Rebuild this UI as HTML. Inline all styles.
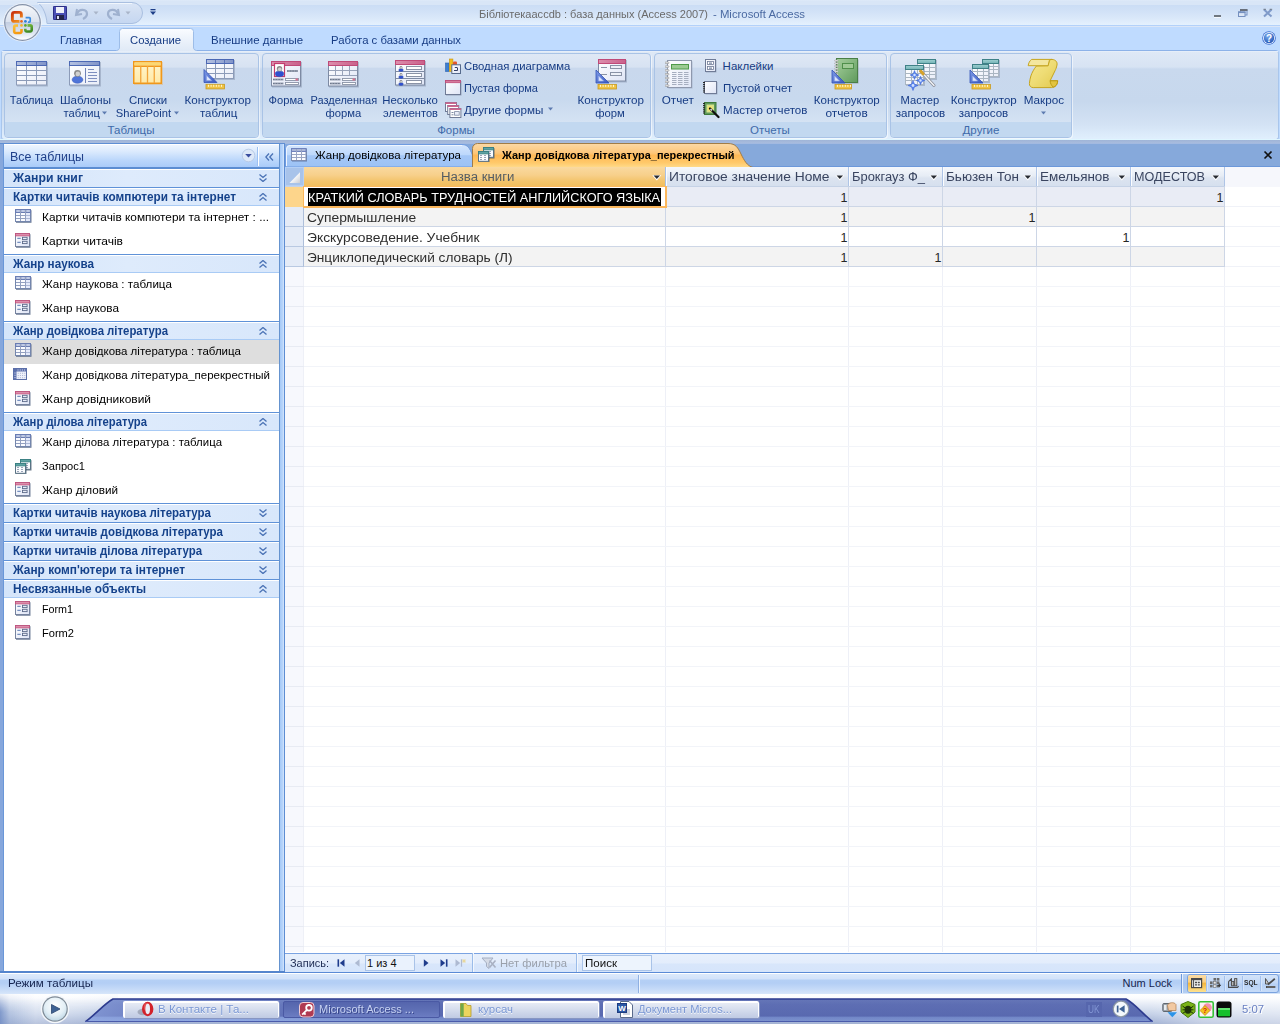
<!DOCTYPE html>
<html><head><meta charset="utf-8"><title>Microsoft Access</title>
<style>
html,body{margin:0;padding:0}
body{width:1280px;height:1024px;overflow:hidden;position:relative;background:#bfdbff;font-family:"Liberation Sans", sans-serif;font-size:11px}
div,span.t,svg{position:absolute;box-sizing:border-box}
span.t{white-space:pre;display:block}
</style></head>
<body>
<div style="left:0px;top:0px;width:1280px;height:27px;background:linear-gradient(#e0ebf9 0,#d9e6f7 1px,#d9e6f7 5px,#cbddf5 5px,#d2e2f7 12px,#dbe9fa 19px,#e4f1fe 25px,#b3d1fa 25px,#b3d1fa 26px,#dbe6f7 26px,#dbe6f7 27px)"></div>
<div style="left:0px;top:27px;width:1280px;height:25px;background:#bfdbff"></div>
<span class="t" style="left:479.00px;top:9.27px;font-size:11.5px;line-height:11.5px;color:#6a6a6a;transform:scaleX(0.9580);transform-origin:0 0;">Бібліотекаaccdb : база данных (Access 2007)</span>
<span class="t" style="left:713.00px;top:9.27px;font-size:11.5px;line-height:11.5px;color:#4b6aa2;transform:scaleX(0.9859);transform-origin:0 0;">- Microsoft Access</span>
<svg style="left:1205px;top:4px" width="75" height="20" viewBox="0 0 75 20"><rect x="9" y="13" width="7" height="1" fill="#f4f8fd"/><rect x="9" y="11" width="7" height="2" fill="#6f7780"/><rect x="35.5" y="6" width="6.5" height="5" fill="none" stroke="#7590c0"/><rect x="35" y="5" width="7.5" height="2" fill="#686f7a"/><rect x="33.5" y="8" width="6.5" height="4.5" fill="#dbe6f5" stroke="#7590c0"/><rect x="33" y="7.5" width="7.5" height="1.6" fill="#7590c0"/><path d="M59 5.6l7.5 7M66.5 5.6l-7.5 7" stroke="#7f9ac9" stroke-width="2.1" fill="none"/><path d="M58.4 5.3h2.6M64.6 5.3h2.6" stroke="#6f7780" stroke-width="0.9"/></svg>
<svg style="left:36px;top:0" width="130" height="28" viewBox="0 0 130 28"><defs><linearGradient id="qg" x1="0" y1="0" x2="0" y2="1"><stop offset="0" stop-color="#dbe6f6"/><stop offset="0.5" stop-color="#cfddf2"/><stop offset="1" stop-color="#c5d7f1"/></linearGradient></defs><path d="M1.5 2.5 H96 A10.5 10.5 0 0 1 96 23.5 H11 C10.5 15 7 6 1.5 2.5Z" fill="url(#qg)" stroke="#a9bfe0" stroke-width="1"/><path d="M2 3.5 H96" stroke="#f1f6fc" stroke-width="1" fill="none"/><rect x="17" y="6" width="14" height="14" rx="1" fill="#4a4fb5"/><rect x="17.5" y="6.5" width="13" height="13" rx="1" fill="none" stroke="#2c2f86"/><rect x="20" y="7" width="8" height="6" fill="#eef0fa"/><rect x="20" y="15" width="8" height="5" fill="#23244a"/><rect x="21" y="16" width="2" height="3" fill="#d8daf0"/><path d="M41 9 l-1 6 6-1" fill="none" stroke="#9fb1cf" stroke-width="2"/><path d="M41 14 c2-6 10-5 10 0 c0 3-2 4-4 5" fill="none" stroke="#9fb1cf" stroke-width="2.2"/><path d="M57.5 11.5h5l-2.5 3z" fill="#a9b4c8"/><path d="M82 9 l1 6-6-1" fill="none" stroke="#9fb1cf" stroke-width="2"/><path d="M82 14 c-2-6-10-5-10 0 c0 3 2 4 4 5" fill="none" stroke="#9fb1cf" stroke-width="2.2"/><path d="M89.5 11.5h5l-2.5 3z" fill="#a9b4c8"/><rect x="114.5" y="9" width="5" height="1.3" fill="#1e3f88"/><path d="M114 11.5h6l-3 3.5z" fill="#1e3f88"/></svg>
<svg style="left:2px;top:2px" width="42" height="42" viewBox="0 0 42 42"><defs><linearGradient id="ob2" x1="0" y1="0" x2="0" y2="1"><stop offset="0" stop-color="#f6f8fb"/><stop offset="0.48" stop-color="#dbe2ee"/><stop offset="0.5" stop-color="#c3cee1"/><stop offset="0.8" stop-color="#dde5f1"/><stop offset="1" stop-color="#ffffff"/></linearGradient><linearGradient id="lr" x1="0" y1="0" x2="0.6" y2="1"><stop offset="0" stop-color="#c9300c"/><stop offset="1" stop-color="#f08a1c"/></linearGradient><linearGradient id="ly" x1="0" y1="0" x2="0.4" y2="1"><stop offset="0" stop-color="#fbc23a"/><stop offset="1" stop-color="#f59a12"/></linearGradient><linearGradient id="lg" x1="0" y1="0" x2="0.5" y2="1"><stop offset="0" stop-color="#7fbf3f"/><stop offset="1" stop-color="#3f8a24"/></linearGradient></defs><circle cx="20.5" cy="20.5" r="19.3" fill="#f2f5fa" opacity="0.8"/><circle cx="20.5" cy="20.5" r="18.4" fill="#8592a9"/><circle cx="20.5" cy="20.5" r="17.2" fill="url(#ob2)"/><path d="M17.5 19.4 H12.4 a2 2 0 0 1 -2-2 V12.4 a2 2 0 0 1 2-2 H17.4 a2 2 0 0 1 2 2 V15.5" fill="none" stroke="url(#lr)" stroke-width="2.9"/><path d="M23.6 15.6 H27.3 a0.9 0.9 0 0 1 0.9 0.9 V19.2 a0.9 0.9 0 0 1 -0.9 0.9 H26" fill="none" stroke="#3b8de0" stroke-width="1.7"/><path d="M19.5 27 V29.5 a1.5 1.5 0 0 1 -1.5 1.5 H13.7 a1.5 1.5 0 0 1 -1.5-1.5 V25 a1.5 1.5 0 0 1 1.5-1.5 H16" fill="none" stroke="url(#ly)" stroke-width="2.6"/><path d="M25.5 23.4 H28.2 a1.5 1.5 0 0 1 1.5 1.5 V28 a1.5 1.5 0 0 1 -1.5 1.5 H24.8 a1.5 1.5 0 0 1 -1.5-1.5 V26.8" fill="none" stroke="url(#lg)" stroke-width="2.6"/><circle cx="19.5" cy="19.3" r="1.35" fill="#ea6a1e"/><circle cx="23.4" cy="19.3" r="1.35" fill="#2f7fe0"/><circle cx="19.5" cy="23.4" r="1.35" fill="#f6b52a"/><circle cx="23.4" cy="23.4" r="1.35" fill="#5aa82c"/></svg>
<span class="t" style="left:60.00px;top:35.27px;font-size:11.5px;line-height:11.5px;color:#173c84;transform:scaleX(0.9593);transform-origin:0 0;">Главная</span>
<span class="t" style="left:211.00px;top:35.27px;font-size:11.5px;line-height:11.5px;color:#173c84;transform:scaleX(0.9948);transform-origin:0 0;">Внешние данные</span>
<span class="t" style="left:331.00px;top:35.27px;font-size:11.5px;line-height:11.5px;color:#173c84;transform:scaleX(0.9871);transform-origin:0 0;">Работа с базами данных</span>
<svg style="left:1262px;top:31px" width="14" height="14" viewBox="0 0 14 14"><defs><radialGradient id="hg" cx="0.4" cy="0.3" r="0.8"><stop offset="0" stop-color="#7fb0f0"/><stop offset="1" stop-color="#1d4fb0"/></radialGradient></defs><circle cx="7" cy="7" r="6.8" fill="#3d6fd0"/><circle cx="7" cy="7" r="6" fill="#f0f6ff"/><circle cx="7" cy="7" r="5.2" fill="url(#hg)"/><text x="7" y="10.6" font-family="Liberation Sans" font-weight="bold" font-size="10" fill="#fff" text-anchor="middle">?</text></svg>
<div style="left:1px;top:50px;width:1278px;height:90px;border:1px solid #a9c6ec;border-top-color:#8db2e8;border-radius:4px 4px 3px 3px;background:linear-gradient(#dfe9f6 0,#d7e3f3 16px,#c9d9ee 18px,#c7d8ed 50px,#d3e2f4 73px,#e1f0fe 89px)"></div>
<div style="left:2px;top:51px;width:1276px;height:1px;background:#e6eef9"></div>
<div style="left:0px;top:139px;width:1280px;height:1px;background:#dff6ff"></div>
<div style="left:0px;top:140px;width:1280px;height:3px;background:linear-gradient(#9fb4d7,#a8bcde)"></div>
<div style="left:0px;top:143px;width:285px;height:1px;background:#5f8fd4"></div>
<div style="left:285px;top:143px;width:995px;height:1px;background:#a2b9e0"></div>
<svg style="left:116px;top:27px" width="82" height="24" viewBox="0 0 82 24"><defs><linearGradient id="at" x1="0" y1="0" x2="0" y2="1"><stop offset="0" stop-color="#fafcff"/><stop offset="0.45" stop-color="#edf3fb"/><stop offset="1" stop-color="#dfe9f6"/></linearGradient></defs><path d="M0.5 23.5 C3 23 3.5 22 3.5 20 V4.5 a3 3 0 0 1 3-3 H74.5 a3 3 0 0 1 3 3 V20 C77.5 22 78 23 80.5 23.5 V24.5 H0.5Z" fill="url(#at)"/><path d="M0.5 23.5 C3 23 3.5 22 3.5 20 V4.5 a3 3 0 0 1 3-3 H74.5 a3 3 0 0 1 3 3 V20 C77.5 22 78 23 80.5 23.5" fill="none" stroke="#9dbde8" stroke-width="1"/></svg>
<span class="t" style="left:130.00px;top:35.27px;font-size:11.5px;line-height:11.5px;color:#173c84;transform:scaleX(0.9831);transform-origin:0 0;">Создание</span>
<div style="left:4px;top:53px;width:255px;height:85px;border:1px solid #a9c3e6;border-radius:4px;background:linear-gradient(#dfe8f5 0,#d7e2f2 13px,#c9d8ed 14.5px,#c8d9ee 45px,#d4e2f3 67px,#d6e4f4 69px);box-shadow:1px 1px 0 rgba(255,255,255,.55)"></div>
<div style="left:5px;top:122px;width:253px;height:15px;background:#c2d8f0;border-radius:0 0 3px 3px"></div>
<span class="t" style="left:107.52px;top:125.27px;font-size:11.5px;line-height:11.5px;color:#3e6aaa;">Таблицы</span>
<div style="left:262px;top:53px;width:389px;height:85px;border:1px solid #a9c3e6;border-radius:4px;background:linear-gradient(#dfe8f5 0,#d7e2f2 13px,#c9d8ed 14.5px,#c8d9ee 45px,#d4e2f3 67px,#d6e4f4 69px);box-shadow:1px 1px 0 rgba(255,255,255,.55)"></div>
<div style="left:263px;top:122px;width:387px;height:15px;background:#c2d8f0;border-radius:0 0 3px 3px"></div>
<span class="t" style="left:437.14px;top:125.27px;font-size:11.5px;line-height:11.5px;color:#3e6aaa;">Формы</span>
<div style="left:654px;top:53px;width:233px;height:85px;border:1px solid #a9c3e6;border-radius:4px;background:linear-gradient(#dfe8f5 0,#d7e2f2 13px,#c9d8ed 14.5px,#c8d9ee 45px,#d4e2f3 67px,#d6e4f4 69px);box-shadow:1px 1px 0 rgba(255,255,255,.55)"></div>
<div style="left:655px;top:122px;width:231px;height:15px;background:#c2d8f0;border-radius:0 0 3px 3px"></div>
<span class="t" style="left:750.12px;top:125.27px;font-size:11.5px;line-height:11.5px;color:#3e6aaa;">Отчеты</span>
<div style="left:890px;top:53px;width:182px;height:85px;border:1px solid #a9c3e6;border-radius:4px;background:linear-gradient(#dfe8f5 0,#d7e2f2 13px,#c9d8ed 14.5px,#c8d9ee 45px,#d4e2f3 67px,#d6e4f4 69px);box-shadow:1px 1px 0 rgba(255,255,255,.55)"></div>
<div style="left:891px;top:122px;width:180px;height:15px;background:#c2d8f0;border-radius:0 0 3px 3px"></div>
<span class="t" style="left:962.59px;top:125.27px;font-size:11.5px;line-height:11.5px;color:#3e6aaa;">Другие</span>
<svg width="0" height="0" style="left:0;top:0"><defs><linearGradient id="gBlueH" x1="0" y1="0" x2="1" y2="0"><stop offset="0" stop-color="#b4c1e0"/><stop offset="1" stop-color="#8194c8"/></linearGradient><linearGradient id="gPinkH" x1="0" y1="0" x2="1" y2="0"><stop offset="0" stop-color="#dc8eac"/><stop offset="1" stop-color="#c9618b"/></linearGradient><linearGradient id="gTealH" x1="0" y1="0" x2="0" y2="1"><stop offset="0" stop-color="#9fd0d1"/><stop offset="1" stop-color="#74b3b6"/></linearGradient><linearGradient id="gCell" x1="0" y1="0" x2="1" y2="1"><stop offset="0" stop-color="#ffffff"/><stop offset="1" stop-color="#e9edf8"/></linearGradient><linearGradient id="gOr" x1="0" y1="0" x2="0" y2="1"><stop offset="0" stop-color="#fff6cf"/><stop offset="1" stop-color="#ffe9a6"/></linearGradient><linearGradient id="gGreen" x1="0" y1="0" x2="1" y2="1"><stop offset="0" stop-color="#a6cf9d"/><stop offset="1" stop-color="#5f9a5c"/></linearGradient><linearGradient id="gTri" x1="0" y1="0" x2="1" y2="1"><stop offset="0" stop-color="#7f9be6"/><stop offset="1" stop-color="#3858c0"/></linearGradient><linearGradient id="gScroll" x1="0" y1="0" x2="1" y2="1"><stop offset="0" stop-color="#f6e88e"/><stop offset="0.5" stop-color="#eedc74"/><stop offset="1" stop-color="#e2c94e"/></linearGradient><linearGradient id="gPage" x1="0" y1="0" x2="1" y2="1"><stop offset="0" stop-color="#ffffff"/><stop offset="1" stop-color="#dfe5f6"/></linearGradient></defs></svg>
<svg style="left:16px;top:61px" width="33" height="26" viewBox="0 0 33 26" ><rect x="1" y="1" width="31" height="24.5" fill="#8c9ab3" opacity="0.55"/><rect x="0.5" y="0.5" width="30" height="23.5" fill="url(#gCell)" stroke="#8c9bb8"/><rect x="0.5" y="0.5" width="30" height="4" fill="url(#gBlueH)" stroke="#4c68b4"/><path d="M10.5 5 V23.5" stroke="#8c9bb8"/><path d="M10.5 1 V4" stroke="#4c68b4" opacity="0.8"/><path d="M20.5 5 V23.5" stroke="#8c9bb8"/><path d="M20.5 1 V4" stroke="#4c68b4" opacity="0.8"/><path d="M1 9.5 H30" stroke="#8c9bb8"/><path d="M1 14.5 H30" stroke="#8c9bb8"/><path d="M1 19.5 H30" stroke="#8c9bb8"/></svg>
<span class="t" style="left:9.15px;top:95.27px;font-size:11.5px;line-height:11.5px;color:#173c84;transform:scaleX(0.9624);transform-origin:50% 0;">Таблица</span>
<svg style="left:69px;top:61px" width="33" height="26" viewBox="0 0 33 26" ><rect x="1" y="1" width="31" height="24.5" fill="#8c9ab3" opacity="0.55"/><rect x="0.5" y="0.5" width="30" height="23.5" fill="url(#gCell)" stroke="#8c9bb8"/><rect x="0.5" y="0.5" width="30" height="4" fill="url(#gBlueH)" stroke="#4c68b4"/><path d="M16.5 7V22" stroke="#6f82b8" stroke-width="1"/><rect x="19" y="8" width="6" height="1" fill="#7e8fbf"/><rect x="19" y="11" width="9" height="1" fill="#7e8fbf"/><rect x="19" y="14" width="9" height="1" fill="#7e8fbf"/><rect x="19" y="17" width="9" height="1" fill="#7e8fbf"/><rect x="19" y="20" width="9" height="1" fill="#7e8fbf"/><ellipse cx="8.5" cy="18.7" rx="5.4" ry="3.6" fill="#4f74d8" stroke="#3656b5" stroke-width="0.5"/><circle cx="8.5" cy="12.3" r="3.4" fill="#8a8a8a"/><circle cx="8.8" cy="12.9" r="2.3" fill="#cfcfcf"/></svg>
<span class="t" style="left:59.77px;top:95.27px;font-size:11.5px;line-height:11.5px;color:#173c84;transform:scaleX(1.0028);transform-origin:50% 0;">Шаблоны</span>
<span class="t" style="left:62.54px;top:108.27px;font-size:11.5px;line-height:11.5px;color:#173c84;transform:scaleX(0.9725);transform-origin:50% 0;">таблиц</span>
<svg style="left:102px;top:111px" width="6" height="4" viewBox="0 0 6 4" ><path d="M0 0.5h5l-2.5 3z" fill="#5d7bb0"/></svg>
<svg style="left:133px;top:61px" width="31" height="25" viewBox="0 0 31 25" ><rect x="1" y="1" width="29" height="23" fill="#e9b05a" opacity="0.4"/><rect x="0.75" y="0.75" width="27.5" height="21.5" fill="url(#gOr)" stroke="#f0981c" stroke-width="1.5"/><rect x="1.5" y="1.5" width="26" height="3" fill="#fcd873"/><path d="M1 5.25H28" stroke="#f0981c" stroke-width="1.5"/><path d="M7.75 5V22M14.5 5V22M21.25 5V22" stroke="#f2a53a" stroke-width="1.3"/></svg>
<span class="t" style="left:128.61px;top:95.27px;font-size:11.5px;line-height:11.5px;color:#173c84;transform:scaleX(0.9955);transform-origin:50% 0;">Списки</span>
<span class="t" style="left:115.25px;top:108.27px;font-size:11.5px;line-height:11.5px;color:#173c84;transform:scaleX(0.9718);transform-origin:50% 0;">SharePoint</span>
<svg style="left:174px;top:111px" width="6" height="4" viewBox="0 0 6 4" ><path d="M0 0.5h5l-2.5 3z" fill="#5d7bb0"/></svg>
<svg style="left:203px;top:58px" width="34" height="32" viewBox="0 0 34 32" ><rect x="4" y="2" width="28" height="20" fill="#8c9ab3" opacity="0.55"/><rect x="3.5" y="1.5" width="27" height="19" fill="url(#gCell)" stroke="#8c9bb8"/><rect x="3.5" y="1.5" width="27" height="4" fill="url(#gBlueH)" stroke="#4c68b4"/><path d="M12.5 6 V20" stroke="#8c9bb8"/><path d="M12.5 2 V5" stroke="#4c68b4" opacity="0.8"/><path d="M21.5 6 V20" stroke="#8c9bb8"/><path d="M21.5 2 V5" stroke="#4c68b4" opacity="0.8"/><path d="M4 10.5 H30" stroke="#8c9bb8"/><path d="M4 15.5 H30" stroke="#8c9bb8"/><path d="M1 11.5 L14 24.5 H1 Z" fill="url(#gTri)" stroke="#3353b8" stroke-width="0.8"/><path d="M3.6 17.5 L8.6 22.5 H3.6 Z" fill="#dfe8fb" stroke="#8fa6ea" stroke-width="0.6"/><rect x="3" y="26.3" width="18.5" height="4.6" fill="#f0c445" stroke="#c99a1f" stroke-width="0.8"/><rect x="5" y="26.8" width="1" height="2" fill="#fff7d0"/><rect x="7.6" y="26.8" width="1" height="2" fill="#fff7d0"/><rect x="10.2" y="26.8" width="1" height="2" fill="#fff7d0"/><rect x="12.799999999999999" y="26.8" width="1" height="2" fill="#fff7d0"/><rect x="15.399999999999999" y="26.8" width="1" height="2" fill="#fff7d0"/><rect x="18.0" y="26.8" width="1" height="2" fill="#fff7d0"/></svg>
<span class="t" style="left:185.41px;top:95.27px;font-size:11.5px;line-height:11.5px;color:#173c84;transform:scaleX(1.0141);transform-origin:50% 0;">Конструктор</span>
<span class="t" style="left:199.54px;top:108.27px;font-size:11.5px;line-height:11.5px;color:#173c84;transform:scaleX(1.0046);transform-origin:50% 0;">таблиц</span>
<svg style="left:271px;top:61px" width="32" height="27" viewBox="0 0 32 27" ><rect x="1" y="1" width="30" height="25.5" fill="#8c9ab3" opacity="0.55"/><rect x="0.5" y="0.5" width="29" height="24.5" fill="url(#gPage)" stroke="#7d8aa3"/><rect x="0.5" y="0.5" width="29" height="4" fill="url(#gPinkH)" stroke="#c04a78"/><rect x="3.5" y="2.5" width="10" height="13" fill="#fff" stroke="#c23c6e" stroke-width="1.2"/><ellipse cx="8.5" cy="12.86" rx="4.32" ry="2.8800000000000003" fill="#2f4fd0" stroke="#3656b5" stroke-width="0.5"/><circle cx="8.5" cy="7.74" r="2.72" fill="#8a8a8a"/><circle cx="8.74" cy="8.219999999999999" r="1.8399999999999999" fill="#cfcfcf"/><rect x="16" y="9.0" width="11" height="2" fill="#9aa2b3"/><path d="M16 10.0 H27" stroke="#6e788c" stroke-width="1" stroke-dasharray="1.5 1.2"/><rect x="2" y="17.5" width="10.5" height="2" fill="#9aa2b3"/><path d="M2 18.5 H12.5" stroke="#6e788c" stroke-width="1" stroke-dasharray="1.5 1.2"/><rect x="14.5" y="17.5" width="13" height="2" fill="#fff" stroke="#8a93a6" stroke-width="0.9"/><rect x="24.5" y="17.5" width="2.5" height="2" fill="#d9708f"/><rect x="2" y="21.5" width="10.5" height="2" fill="#9aa2b3"/><path d="M2 22.5 H12.5" stroke="#6e788c" stroke-width="1" stroke-dasharray="1.5 1.2"/><rect x="14.5" y="21.5" width="13" height="2" fill="#fff" stroke="#8a93a6" stroke-width="0.9"/></svg>
<span class="t" style="left:268.18px;top:95.27px;font-size:11.5px;line-height:11.5px;color:#173c84;transform:scaleX(0.9709);transform-origin:50% 0;">Форма</span>
<svg style="left:328px;top:61px" width="32" height="27" viewBox="0 0 32 27" ><rect x="1" y="1" width="30" height="25.5" fill="#8c9ab3" opacity="0.55"/><rect x="0.5" y="0.5" width="29" height="24.5" fill="url(#gPage)" stroke="#7d8aa3"/><rect x="0.5" y="0.5" width="29" height="4" fill="url(#gPinkH)" stroke="#c04a78"/><path d="M1 9.5H29M1 14.5H29M7.5 5V14.5M14.5 5V14.5M21.5 5V14.5" stroke="#98a3ba"/><rect x="2" y="17.5" width="10.5" height="2" fill="#9aa2b3"/><path d="M2 18.5 H12.5" stroke="#6e788c" stroke-width="1" stroke-dasharray="1.5 1.2"/><rect x="14.5" y="17.5" width="13" height="2" fill="#fff" stroke="#8a93a6" stroke-width="0.9"/><rect x="24.5" y="17.5" width="2.5" height="2" fill="#d9708f"/><rect x="2" y="21.5" width="10.5" height="2" fill="#9aa2b3"/><path d="M2 22.5 H12.5" stroke="#6e788c" stroke-width="1" stroke-dasharray="1.5 1.2"/><rect x="14.5" y="21.5" width="13" height="2" fill="#fff" stroke="#8a93a6" stroke-width="0.9"/></svg>
<span class="t" style="left:308.73px;top:95.27px;font-size:11.5px;line-height:11.5px;color:#173c84;transform:scaleX(0.9551);transform-origin:50% 0;">Разделенная</span>
<span class="t" style="left:325.32px;top:108.27px;font-size:11.5px;line-height:11.5px;color:#173c84;transform:scaleX(0.9791);transform-origin:50% 0;">форма</span>
<svg style="left:395px;top:60px" width="32" height="27" viewBox="0 0 32 27" ><rect x="1" y="1" width="30" height="25.5" fill="#8c9ab3" opacity="0.55"/><rect x="0.5" y="0.5" width="29" height="24.5" fill="url(#gPage)" stroke="#7d8aa3"/><rect x="0.5" y="0.5" width="29" height="4" fill="url(#gPinkH)" stroke="#c04a78"/><path d="M1 11.5H29M1 18.5H29" stroke="#7d8aa3"/><ellipse cx="6" cy="10.064" rx="2.2680000000000002" ry="1.512" fill="#2f4fd0" stroke="#3656b5" stroke-width="0.5"/><circle cx="6" cy="7.376" r="1.428" fill="#8a8a8a"/><circle cx="6.126" cy="7.628000000000001" r="0.9659999999999999" fill="#cfcfcf"/><rect x="11.5" y="6.5" width="15" height="3" fill="#fff" stroke="#8a93a6"/><ellipse cx="6" cy="17.064" rx="2.2680000000000002" ry="1.512" fill="#2f4fd0" stroke="#3656b5" stroke-width="0.5"/><circle cx="6" cy="14.376000000000001" r="1.428" fill="#8a8a8a"/><circle cx="6.126" cy="14.628" r="0.9659999999999999" fill="#cfcfcf"/><rect x="11.5" y="13.5" width="15" height="3" fill="#fff" stroke="#8a93a6"/><ellipse cx="6" cy="24.064" rx="2.2680000000000002" ry="1.512" fill="#2f4fd0" stroke="#3656b5" stroke-width="0.5"/><circle cx="6" cy="21.376" r="1.428" fill="#8a8a8a"/><circle cx="6.126" cy="21.628" r="0.9659999999999999" fill="#cfcfcf"/><rect x="11.5" y="20.5" width="15" height="3" fill="#fff" stroke="#8a93a6"/></svg>
<span class="t" style="left:382.29px;top:95.27px;font-size:11.5px;line-height:11.5px;color:#173c84;transform:scaleX(0.9890);transform-origin:50% 0;">Несколько</span>
<span class="t" style="left:381.78px;top:108.27px;font-size:11.5px;line-height:11.5px;color:#173c84;transform:scaleX(0.9609);transform-origin:50% 0;">элементов</span>
<svg style="left:445px;top:58px" width="17" height="17" viewBox="0 0 17 17" ><rect x="0.5" y="5" width="3.5" height="8.5" fill="#3d7fd0" stroke="#2a62b0" stroke-width="0.6"/><rect x="4.3" y="1" width="3.6" height="12.5" fill="#f3bd1d" stroke="#c9950f" stroke-width="0.6"/><rect x="8" y="3.5" width="4" height="5" rx="1" fill="#e2562b"/><rect x="6.8" y="6.8" width="8.7" height="8.7" fill="url(#gPage)" stroke="#566a8c"/><path d="M9 12.5h3.5M12 9.5h-2.2M12.5 12.5v-3" stroke="#333f66" stroke-width="1" fill="none"/></svg>
<span class="t" style="left:464.40px;top:61.27px;font-size:11.5px;line-height:11.5px;color:#173c84;transform:scaleX(0.9848);transform-origin:0 0;">Сводная диаграмма</span>
<svg style="left:445px;top:80px" width="17" height="16" viewBox="0 0 17 16" ><rect x="1" y="1" width="15.5" height="14.5" fill="#7b879f" opacity="0.6"/><rect x="0.5" y="0.5" width="15" height="14" fill="url(#gPage)" stroke="#6f7b96"/><rect x="0.5" y="0.5" width="15" height="2.2" fill="#d57a9c" stroke="#c04a78" stroke-width="0.8"/></svg>
<span class="t" style="left:464.40px;top:83.27px;font-size:11.5px;line-height:11.5px;color:#173c84;transform:scaleX(0.9591);transform-origin:0 0;">Пустая форма</span>
<svg style="left:445px;top:102px" width="17" height="17" viewBox="0 0 17 17" ><rect x="0.5" y="0.5" width="11" height="9" fill="#fff" stroke="#6f7b96"/><rect x="0.3" y="0.3" width="11.4" height="1.7" fill="#cf668e"/><rect x="2.7" y="3.5" width="11" height="9" fill="#fff" stroke="#6f7b96"/><rect x="2.5" y="3.3" width="11.4" height="1.7" fill="#cf668e"/><rect x="4.9" y="6.5" width="11" height="9" fill="#fff" stroke="#6f7b96"/><rect x="4.7" y="6.3" width="11.4" height="1.7" fill="#cf668e"/><rect x="6.5" y="10" width="2" height="1" fill="#7d8aa3"/><rect x="6.5" y="12.3" width="2" height="1" fill="#7d8aa3"/><rect x="9.6" y="9.6" width="4.6" height="3.6" fill="#e9edf8" stroke="#7d8aa3" stroke-width="0.8"/></svg>
<span class="t" style="left:464.40px;top:105.27px;font-size:11.5px;line-height:11.5px;color:#173c84;transform:scaleX(1.0121);transform-origin:0 0;">Другие формы</span>
<svg style="left:548px;top:107px" width="6" height="4" viewBox="0 0 6 4" ><path d="M0 0.5h5l-2.5 3z" fill="#5d7bb0"/></svg>
<svg style="left:595px;top:58px" width="33" height="33" viewBox="0 0 33 33" ><rect x="4" y="2" width="28" height="22.5" fill="#8c9ab3" opacity="0.55"/><rect x="3.5" y="1.5" width="27" height="21.5" fill="url(#gPage)" stroke="#7d8aa3"/><rect x="3.5" y="1.5" width="27" height="4" fill="url(#gPinkH)" stroke="#c04a78"/><rect x="6" y="9" width="6" height="1" fill="#8a93a6"/><rect x="6" y="16" width="6" height="1" fill="#8a93a6"/><rect x="15.5" y="7.5" width="11" height="3" fill="#eef1f8" stroke="#8a93a6"/><rect x="15.5" y="14.5" width="11" height="3" fill="#eef1f8" stroke="#8a93a6"/><path d="M1 12 L14 25 H1 Z" fill="url(#gTri)" stroke="#3353b8" stroke-width="0.8"/><path d="M3.6 18 L8.6 23 H3.6 Z" fill="#dfe8fb" stroke="#8fa6ea" stroke-width="0.6"/><rect x="3" y="26.4" width="18.5" height="4.6" fill="#f0c445" stroke="#c99a1f" stroke-width="0.8"/><rect x="5" y="26.9" width="1" height="2" fill="#fff7d0"/><rect x="7.6" y="26.9" width="1" height="2" fill="#fff7d0"/><rect x="10.2" y="26.9" width="1" height="2" fill="#fff7d0"/><rect x="12.799999999999999" y="26.9" width="1" height="2" fill="#fff7d0"/><rect x="15.399999999999999" y="26.9" width="1" height="2" fill="#fff7d0"/><rect x="18.0" y="26.9" width="1" height="2" fill="#fff7d0"/></svg>
<span class="t" style="left:577.51px;top:95.27px;font-size:11.5px;line-height:11.5px;color:#173c84;transform:scaleX(1.0141);transform-origin:50% 0;">Конструктор</span>
<span class="t" style="left:595.21px;top:108.27px;font-size:11.5px;line-height:11.5px;color:#173c84;transform:scaleX(0.9810);transform-origin:50% 0;">форм</span>
<svg style="left:665px;top:60px" width="30" height="30" viewBox="0 0 30 30" ><rect x="3.5" y="1.5" width="24" height="27" fill="#8c9ab3" opacity="0.5"/><rect x="2.5" y="0.5" width="24" height="27" fill="url(#gPage)" stroke="#8e98ad"/><rect x="6.5" y="4.5" width="17" height="4.5" fill="#9ccb93" stroke="#4f9a4a"/><path d="M7 12.5H11.5M13 12.5H17.5M19 12.5H23.5" stroke="#a6aebf" stroke-width="1"/><path d="M7 14.5H11.5M13 14.5H17.5M19 14.5H23.5" stroke="#a6aebf" stroke-width="1"/><path d="M7 16.5H11.5M13 16.5H17.5M19 16.5H23.5" stroke="#a6aebf" stroke-width="1"/><path d="M7 18.5H11.5M13 18.5H17.5M19 18.5H23.5" stroke="#a6aebf" stroke-width="1"/><path d="M7 20.5H11.5M13 20.5H17.5M19 20.5H23.5" stroke="#a6aebf" stroke-width="1"/><path d="M7 22.5H11.5M13 22.5H17.5M19 22.5H23.5" stroke="#a6aebf" stroke-width="1"/><path d="M7 24.5H11.5M13 24.5H17.5M19 24.5H23.5" stroke="#a6aebf" stroke-width="1"/><rect x="0" y="2.0" width="4" height="1.6" rx="0.8" fill="#f2f2f2" stroke="#8c8c8c" stroke-width="0.6"/><rect x="0" y="5.8" width="4" height="1.6" rx="0.8" fill="#f2f2f2" stroke="#8c8c8c" stroke-width="0.6"/><rect x="0" y="9.6" width="4" height="1.6" rx="0.8" fill="#f2f2f2" stroke="#8c8c8c" stroke-width="0.6"/><rect x="0" y="13.399999999999999" width="4" height="1.6" rx="0.8" fill="#f2f2f2" stroke="#8c8c8c" stroke-width="0.6"/><rect x="0" y="17.2" width="4" height="1.6" rx="0.8" fill="#f2f2f2" stroke="#8c8c8c" stroke-width="0.6"/><rect x="0" y="21.0" width="4" height="1.6" rx="0.8" fill="#f2f2f2" stroke="#8c8c8c" stroke-width="0.6"/><rect x="0" y="24.799999999999997" width="4" height="1.6" rx="0.8" fill="#f2f2f2" stroke="#8c8c8c" stroke-width="0.6"/></svg>
<span class="t" style="left:662.45px;top:95.27px;font-size:11.5px;line-height:11.5px;color:#173c84;transform:scaleX(1.0159);transform-origin:50% 0;">Отчет</span>
<svg style="left:705px;top:59px" width="12" height="14" viewBox="0 0 12 14" ><rect x="1" y="1" width="10.5" height="12.5" fill="#7b879f" opacity="0.5"/><rect x="0.5" y="0.5" width="10" height="12" fill="url(#gPage)" stroke="#6f7b96"/><rect x="2.5" y="2.5" width="6" height="3" fill="#fff" stroke="#6f7b96" stroke-width="0.8"/><rect x="2.5" y="7.5" width="6" height="3" fill="#fff" stroke="#6f7b96" stroke-width="0.8"/><rect x="4" y="3.6" width="3" height="1" fill="#566a8c"/><rect x="4" y="8.6" width="3" height="1" fill="#566a8c"/></svg>
<span class="t" style="left:722.60px;top:61.27px;font-size:11.5px;line-height:11.5px;color:#173c84;">Наклейки</span>
<svg style="left:703px;top:81px" width="15" height="14" viewBox="0 0 15 14" ><rect x="2.5" y="1" width="12" height="12.5" fill="#7b879f" opacity="0.5"/><rect x="1.5" y="0.5" width="12" height="12" fill="url(#gPage)" stroke="#6f7b96"/><rect x="0" y="1.0" width="2" height="1" fill="#222"/><rect x="0" y="2.9" width="2" height="1" fill="#222"/><rect x="0" y="4.8" width="2" height="1" fill="#222"/><rect x="0" y="6.699999999999999" width="2" height="1" fill="#222"/><rect x="0" y="8.6" width="2" height="1" fill="#222"/><rect x="0" y="10.5" width="2" height="1" fill="#222"/></svg>
<span class="t" style="left:722.60px;top:83.27px;font-size:11.5px;line-height:11.5px;color:#173c84;transform:scaleX(0.9959);transform-origin:0 0;">Пустой отчет</span>
<svg style="left:703px;top:102px" width="17" height="17" viewBox="0 0 17 17" ><rect x="1.5" y="0.5" width="11.5" height="12" fill="#5f9a5c" stroke="#3f7a3c"/><rect x="3.5" y="2.5" width="7.5" height="8" fill="#d8e28a"/><circle cx="7" cy="6.5" r="2.4" fill="#f6e46a"/><rect x="0" y="1.0" width="2" height="1" fill="#222"/><rect x="0" y="2.9" width="2" height="1" fill="#222"/><rect x="0" y="4.8" width="2" height="1" fill="#222"/><rect x="0" y="6.699999999999999" width="2" height="1" fill="#222"/><rect x="0" y="8.6" width="2" height="1" fill="#222"/><rect x="0" y="10.5" width="2" height="1" fill="#222"/><path d="M7 6.5L15.5 15" stroke="#111" stroke-width="2.2" stroke-linecap="round"/><path d="M7.5 7L9 8.5" stroke="#eee" stroke-width="1.2"/></svg>
<span class="t" style="left:722.60px;top:105.27px;font-size:11.5px;line-height:11.5px;color:#173c84;transform:scaleX(1.0042);transform-origin:0 0;">Мастер отчетов</span>
<svg style="left:831px;top:58px" width="30" height="33" viewBox="0 0 30 33" ><rect x="6.5" y="1.5" width="21" height="24" fill="#5a6b5a" opacity="0.45"/><rect x="5.5" y="0.5" width="21" height="24" fill="url(#gGreen)" stroke="#4a7f47"/><rect x="11.5" y="5.5" width="11" height="5" fill="#9fca95" stroke="#4f8f4a"/><rect x="3.6" y="2.0" width="3.6" height="1.4" rx="0.7" fill="#f2f2f2" stroke="#8c8c8c" stroke-width="0.5"/><rect x="3.6" y="4.7" width="3.6" height="1.4" rx="0.7" fill="#f2f2f2" stroke="#8c8c8c" stroke-width="0.5"/><rect x="3.6" y="7.4" width="3.6" height="1.4" rx="0.7" fill="#f2f2f2" stroke="#8c8c8c" stroke-width="0.5"/><rect x="3.6" y="10.100000000000001" width="3.6" height="1.4" rx="0.7" fill="#f2f2f2" stroke="#8c8c8c" stroke-width="0.5"/><rect x="3.6" y="12.8" width="3.6" height="1.4" rx="0.7" fill="#f2f2f2" stroke="#8c8c8c" stroke-width="0.5"/><rect x="3.6" y="15.5" width="3.6" height="1.4" rx="0.7" fill="#f2f2f2" stroke="#8c8c8c" stroke-width="0.5"/><path d="M1 12 L14 25 H1 Z" fill="url(#gTri)" stroke="#3353b8" stroke-width="0.8"/><path d="M3.6 18 L8.6 23 H3.6 Z" fill="#dfe8fb" stroke="#8fa6ea" stroke-width="0.6"/><rect x="4" y="26.4" width="16.5" height="4.6" fill="#f0c445" stroke="#c99a1f" stroke-width="0.8"/><rect x="6" y="26.9" width="1" height="2" fill="#fff7d0"/><rect x="8.6" y="26.9" width="1" height="2" fill="#fff7d0"/><rect x="11.2" y="26.9" width="1" height="2" fill="#fff7d0"/><rect x="13.799999999999999" y="26.9" width="1" height="2" fill="#fff7d0"/><rect x="16.4" y="26.9" width="1" height="2" fill="#fff7d0"/><rect x="19.0" y="26.9" width="1" height="2" fill="#fff7d0"/></svg>
<span class="t" style="left:813.71px;top:95.27px;font-size:11.5px;line-height:11.5px;color:#173c84;transform:scaleX(1.0064);transform-origin:50% 0;">Конструктор</span>
<span class="t" style="left:825.97px;top:108.27px;font-size:11.5px;line-height:11.5px;color:#173c84;transform:scaleX(1.0301);transform-origin:50% 0;">отчетов</span>
<svg style="left:904px;top:58px" width="34" height="34" viewBox="0 0 34 34" ><rect x="14" y="2" width="19" height="20" fill="#8c9ab3" opacity="0.55"/><rect x="13.5" y="1.5" width="18" height="19" fill="url(#gCell)" stroke="#aab6c2"/><rect x="13.5" y="1.5" width="18" height="4" fill="url(#gTealH)" stroke="#3f8187"/><path d="M19.5 6 V20" stroke="#aab6c2"/><path d="M25.5 6 V20" stroke="#aab6c2"/><path d="M14 9.5 H31" stroke="#aab6c2"/><path d="M14 13.5 H31" stroke="#aab6c2"/><path d="M14 16.5 H31" stroke="#aab6c2"/><rect x="2" y="8" width="19" height="20" fill="#8c9ab3" opacity="0.55"/><rect x="1.5" y="7.5" width="18" height="19" fill="url(#gCell)" stroke="#aab6c2"/><rect x="1.5" y="7.5" width="18" height="4" fill="url(#gTealH)" stroke="#3f8187"/><path d="M7.5 12 V26" stroke="#aab6c2"/><path d="M13.5 12 V26" stroke="#aab6c2"/><path d="M2 15.5 H19" stroke="#aab6c2"/><path d="M2 19.5 H19" stroke="#aab6c2"/><path d="M2 22.5 H19" stroke="#aab6c2"/><path d="M10.5 12.6 L11.732 15.768 L14.9 17 L11.732 18.232 L10.5 21.4 L9.268 18.232 L6.1 17 L9.268 15.768Z" fill="#5b86ee" stroke="#3f68d8" stroke-width="0.6"/><circle cx="10.5" cy="17" r="1.2320000000000002" fill="#cfe0ff"/><path d="M16.5 18.3 L17.676000000000002 21.323999999999998 L20.7 22.5 L17.676000000000002 23.676000000000002 L16.5 26.7 L15.324 23.676000000000002 L12.3 22.5 L15.324 21.323999999999998Z" fill="#5b86ee" stroke="#3f68d8" stroke-width="0.6"/><circle cx="16.5" cy="22.5" r="1.1760000000000002" fill="#cfe0ff"/><path d="M9 22.5 L10.4 26.1 L14 27.5 L10.4 28.9 L9 32.5 L7.6 28.9 L4 27.5 L7.6 26.1Z" fill="#5b86ee" stroke="#3f68d8" stroke-width="0.6"/><circle cx="9" cy="27.5" r="1.4000000000000001" fill="#cfe0ff"/><path d="M17 13.5L30 27.5" stroke="#8a8f99" stroke-width="3" stroke-linecap="round"/><path d="M17 13.5L30 27.5" stroke="#f3f4f7" stroke-width="1.4" stroke-linecap="round"/><path d="M16.6 13.1l2.6 2.8" stroke="#d7a22a" stroke-width="3" stroke-linecap="round"/></svg>
<span class="t" style="left:900.40px;top:95.27px;font-size:11.5px;line-height:11.5px;color:#173c84;transform:scaleX(0.9699);transform-origin:50% 0;">Мастер</span>
<span class="t" style="left:895.76px;top:108.27px;font-size:11.5px;line-height:11.5px;color:#173c84;transform:scaleX(1.0086);transform-origin:50% 0;">запросов</span>
<svg style="left:969px;top:58px" width="32" height="33" viewBox="0 0 32 33" ><rect x="14" y="2" width="17" height="18" fill="#8c9ab3" opacity="0.55"/><rect x="13.5" y="1.5" width="16" height="17" fill="url(#gCell)" stroke="#aab6c2"/><rect x="13.5" y="1.5" width="16" height="4" fill="url(#gTealH)" stroke="#3f8187"/><path d="M18.5 6 V18" stroke="#aab6c2"/><path d="M24.5 6 V18" stroke="#aab6c2"/><path d="M14 8.5 H29" stroke="#aab6c2"/><path d="M14 11.5 H29" stroke="#aab6c2"/><path d="M14 15.5 H29" stroke="#aab6c2"/><rect x="4" y="7" width="17" height="18" fill="#8c9ab3" opacity="0.55"/><rect x="3.5" y="6.5" width="16" height="17" fill="url(#gCell)" stroke="#aab6c2"/><rect x="3.5" y="6.5" width="16" height="4" fill="url(#gTealH)" stroke="#3f8187"/><path d="M8.5 11 V23" stroke="#aab6c2"/><path d="M14.5 11 V23" stroke="#aab6c2"/><path d="M4 13.5 H19" stroke="#aab6c2"/><path d="M4 17.5 H19" stroke="#aab6c2"/><path d="M4 20.5 H19" stroke="#aab6c2"/><path d="M1 12 L14 25 H1 Z" fill="url(#gTri)" stroke="#3353b8" stroke-width="0.8"/><path d="M3.6 18 L8.6 23 H3.6 Z" fill="#dfe8fb" stroke="#8fa6ea" stroke-width="0.6"/><rect x="3" y="26.4" width="18.5" height="4.6" fill="#f0c445" stroke="#c99a1f" stroke-width="0.8"/><rect x="5" y="26.9" width="1" height="2" fill="#fff7d0"/><rect x="7.6" y="26.9" width="1" height="2" fill="#fff7d0"/><rect x="10.2" y="26.9" width="1" height="2" fill="#fff7d0"/><rect x="12.799999999999999" y="26.9" width="1" height="2" fill="#fff7d0"/><rect x="15.399999999999999" y="26.9" width="1" height="2" fill="#fff7d0"/><rect x="18.0" y="26.9" width="1" height="2" fill="#fff7d0"/></svg>
<span class="t" style="left:951.21px;top:95.27px;font-size:11.5px;line-height:11.5px;color:#173c84;transform:scaleX(1.0064);transform-origin:50% 0;">Конструктор</span>
<span class="t" style="left:959.46px;top:108.27px;font-size:11.5px;line-height:11.5px;color:#173c84;transform:scaleX(1.0086);transform-origin:50% 0;">запросов</span>
<svg style="left:1026px;top:57px" width="34" height="33" viewBox="0 0 34 33" ><path d="M10.4 9 L22.1 8.7 L23.3 3.3 C24 2.6 25 2.3 26 2.4 C29.5 2.6 31.6 5 31 8 C30.4 11 29.6 12.5 29.2 13.4 L24.1 23.8 H31.7 C31.5 26.5 30.5 28.5 29.2 29.2 C28 30.2 27 30.6 25.5 30.6 H7.2 C4.8 30.6 3.2 28.8 3.4 26.5 C3.6 24 4.2 21 4.9 18.9 C6 15.5 8 12 10.4 9 Z" fill="url(#gScroll)" stroke="#c6a51f" stroke-width="1"/><path d="M2.2 8.7 C2.4 6.5 3.6 3.6 5.7 2.4 H26 C24.5 2.5 23.6 3 23.3 3.5 L22.1 8.7 Z" fill="#f4e79e" stroke="#c6a51f" stroke-width="1" stroke-linejoin="round"/><path d="M24.1 23.8 H31.7 C31.4 26.6 30.4 28.4 29.2 29.2 C28.4 29.8 27.8 30 27.2 30.1 C25.5 28.5 24.3 26.5 24.1 23.8Z" fill="#e2c440" stroke="#b8950f" stroke-width="0.9" stroke-linejoin="round"/></svg>
<span class="t" style="left:1023.76px;top:95.27px;font-size:11.5px;line-height:11.5px;color:#173c84;transform:scaleX(1.0180);transform-origin:50% 0;">Макрос</span>
<svg style="left:1041px;top:111px" width="6" height="4" viewBox="0 0 6 4" ><path d="M0 0.5h5l-2.5 3z" fill="#5d7bb0"/></svg>
<div style="left:0px;top:144px;width:4px;height:850px;background:#86a7dc"></div>
<div style="left:3px;top:144px;width:1px;height:828px;background:#6a97d8"></div>
<div style="left:4px;top:144px;width:276px;height:828px;background:#fff"></div>
<div style="left:279px;top:144px;width:1px;height:828px;background:#6593cf"></div>
<div style="left:280px;top:144px;width:4px;height:829px;background:linear-gradient(90deg,#a6c9f7,#b9d6fb 70%,#dbe9fc)"></div>
<div style="left:284px;top:144px;width:1px;height:829px;background:#5d8dd3"></div>
<div style="left:4px;top:144px;width:275px;height:23px;background:linear-gradient(#eef5ff 0,#dbeafd 30%,#bad6fb 70%,#a9cbf9 100%);border-top:1px solid #fff"></div>
<div style="left:4px;top:167px;width:275px;height:1px;background:#5b8dd2"></div>
<span class="t" style="left:10.00px;top:151.34px;font-size:12px;line-height:12px;color:#21418a;transform:scaleX(1.0336);transform-origin:0 0;">Все таблицы</span>
<svg style="left:241px;top:148px" width="15" height="15" viewBox="0 0 15 15" ><circle cx="7.5" cy="7.5" r="6.3" fill="#dde8f8" stroke="#b4c7e4" stroke-width="0.9"/><path d="M4.2 6h6.6L7.5 9.6z" fill="#3a4ea0"/></svg>
<div style="left:257px;top:147px;width:1px;height:19px;background:#9cc0f2"></div>
<div style="left:258px;top:147px;width:1px;height:19px;background:#fff"></div>
<svg style="left:265px;top:153px" width="9" height="8" viewBox="0 0 9 8" ><path d="M4 0.5L0.8 4L4 7.5M8 0.5L4.8 4L8 7.5" fill="none" stroke="#4a72b5" stroke-width="1.3"/></svg>
<div style="left:4px;top:168px;width:275px;height:1px;background:#5b8dd2"></div>
<div style="left:4px;top:169px;width:275px;height:1px;background:#fff"></div>
<div style="left:4px;top:170px;width:275px;height:17px;background:linear-gradient(90deg,#d5e5fa 0,#deebfc 45%,#d8e7fb 100%)"></div>
<div style="left:4px;top:187px;width:275px;height:1px;background:#5f92d8"></div>
<span class="t" style="left:13.00px;top:172.02px;font-size:12.5px;line-height:12.5px;color:#15428b;font-weight:bold;transform:scaleX(0.9797);transform-origin:0 0;">Жанри книг</span>
<svg style="left:259px;top:174px" width="8" height="8" viewBox="0 0 8 8" ><path d="M0.5 0.5L4 3.5L7.5 0.5M0.5 4.5L4 7.5L7.5 4.5" fill="none" stroke="#4a72b5" stroke-width="1.3"/></svg>
<div style="left:4px;top:188px;width:275px;height:1px;background:#fff"></div>
<div style="left:4px;top:189px;width:275px;height:16px;background:linear-gradient(90deg,#d5e5fa 0,#deebfc 45%,#d8e7fb 100%)"></div>
<div style="left:4px;top:205px;width:275px;height:1px;background:#a9cbf5"></div>
<span class="t" style="left:13.00px;top:191.02px;font-size:12.5px;line-height:12.5px;color:#15428b;font-weight:bold;transform:scaleX(0.9422);transform-origin:0 0;">Картки читачів компютери та інтернет</span>
<svg style="left:259px;top:193px" width="8" height="8" viewBox="0 0 8 8" ><path d="M0.5 3.5L4 0.5L7.5 3.5M0.5 7.5L4 4.5L7.5 7.5" fill="none" stroke="#4a72b5" stroke-width="1.3"/></svg>
<svg style="left:15px;top:209px" width="17" height="15" viewBox="0 0 17 15" ><rect x="1" y="1.2" width="15.5" height="12.6" fill="#3f5275" opacity="0.75"/><rect x="0.5" y="0.5" width="15" height="12" fill="#fbfcff" stroke="#7486ad"/><rect x="0.5" y="0.5" width="15" height="3" fill="#aab7d9" stroke="#6a7db3"/><path d="M2 2H4.5M7 2H9.5M12 2H14.5" stroke="#dfe5f4" stroke-width="0.8"/><path d="M5.5 1V12M10.5 1V12M1 6.5H15M1 9.5H15" stroke="#93a0c0"/><path d="M11 4h4v8h-4z" fill="#c9d5f3" opacity="0.45"/></svg>
<span class="t" style="left:42.00px;top:212.39px;font-size:11px;line-height:11px;color:#000;transform:scaleX(1.0754);transform-origin:0 0;">Картки читачів компютери та інтернет : ...</span>
<svg style="left:15px;top:233px" width="17" height="15" viewBox="0 0 17 15" ><rect x="1" y="1.2" width="14.5" height="13.6" fill="#3f5275" opacity="0.7"/><rect x="0.5" y="0.5" width="14" height="13" fill="url(#gPage)" stroke="#76839f"/><rect x="0.5" y="0.5" width="14" height="2.4" fill="#dc8eac" stroke="#c44f7a" stroke-width="0.8"/><rect x="2.3" y="4.8" width="3.4" height="1" fill="#5877b0"/><rect x="2.3" y="8.8" width="3.4" height="1" fill="#5877b0"/><rect x="7.5" y="4.3" width="4.6" height="2.3" fill="#e9edf7" stroke="#5c6a8a" stroke-width="0.9"/><rect x="7.5" y="8.3" width="4.6" height="2.3" fill="#e9edf7" stroke="#5c6a8a" stroke-width="0.9"/></svg>
<span class="t" style="left:42.00px;top:236.39px;font-size:11px;line-height:11px;color:#000;transform:scaleX(1.0925);transform-origin:0 0;">Картки читачів</span>
<div style="left:4px;top:254px;width:275px;height:1px;background:#5f92d8"></div>
<div style="left:4px;top:255px;width:275px;height:1px;background:#fff"></div>
<div style="left:4px;top:256px;width:275px;height:16px;background:linear-gradient(90deg,#d5e5fa 0,#deebfc 45%,#d8e7fb 100%)"></div>
<div style="left:4px;top:272px;width:275px;height:1px;background:#a9cbf5"></div>
<span class="t" style="left:13.00px;top:258.02px;font-size:12.5px;line-height:12.5px;color:#15428b;font-weight:bold;transform:scaleX(0.9341);transform-origin:0 0;">Жанр наукова</span>
<svg style="left:259px;top:260px" width="8" height="8" viewBox="0 0 8 8" ><path d="M0.5 3.5L4 0.5L7.5 3.5M0.5 7.5L4 4.5L7.5 7.5" fill="none" stroke="#4a72b5" stroke-width="1.3"/></svg>
<svg style="left:15px;top:276px" width="17" height="15" viewBox="0 0 17 15" ><rect x="1" y="1.2" width="15.5" height="12.6" fill="#3f5275" opacity="0.75"/><rect x="0.5" y="0.5" width="15" height="12" fill="#fbfcff" stroke="#7486ad"/><rect x="0.5" y="0.5" width="15" height="3" fill="#aab7d9" stroke="#6a7db3"/><path d="M2 2H4.5M7 2H9.5M12 2H14.5" stroke="#dfe5f4" stroke-width="0.8"/><path d="M5.5 1V12M10.5 1V12M1 6.5H15M1 9.5H15" stroke="#93a0c0"/><path d="M11 4h4v8h-4z" fill="#c9d5f3" opacity="0.45"/></svg>
<span class="t" style="left:42.00px;top:279.39px;font-size:11px;line-height:11px;color:#000;transform:scaleX(1.0560);transform-origin:0 0;">Жанр наукова : таблица</span>
<svg style="left:15px;top:300px" width="17" height="15" viewBox="0 0 17 15" ><rect x="1" y="1.2" width="14.5" height="13.6" fill="#3f5275" opacity="0.7"/><rect x="0.5" y="0.5" width="14" height="13" fill="url(#gPage)" stroke="#76839f"/><rect x="0.5" y="0.5" width="14" height="2.4" fill="#dc8eac" stroke="#c44f7a" stroke-width="0.8"/><rect x="2.3" y="4.8" width="3.4" height="1" fill="#5877b0"/><rect x="2.3" y="8.8" width="3.4" height="1" fill="#5877b0"/><rect x="7.5" y="4.3" width="4.6" height="2.3" fill="#e9edf7" stroke="#5c6a8a" stroke-width="0.9"/><rect x="7.5" y="8.3" width="4.6" height="2.3" fill="#e9edf7" stroke="#5c6a8a" stroke-width="0.9"/></svg>
<span class="t" style="left:42.00px;top:303.39px;font-size:11px;line-height:11px;color:#000;transform:scaleX(1.0678);transform-origin:0 0;">Жанр наукова</span>
<div style="left:4px;top:321px;width:275px;height:1px;background:#5f92d8"></div>
<div style="left:4px;top:322px;width:275px;height:1px;background:#fff"></div>
<div style="left:4px;top:323px;width:275px;height:16px;background:linear-gradient(90deg,#d5e5fa 0,#deebfc 45%,#d8e7fb 100%)"></div>
<div style="left:4px;top:339px;width:275px;height:1px;background:#a9cbf5"></div>
<span class="t" style="left:13.00px;top:325.02px;font-size:12.5px;line-height:12.5px;color:#15428b;font-weight:bold;transform:scaleX(0.9103);transform-origin:0 0;">Жанр довідкова література</span>
<svg style="left:259px;top:327px" width="8" height="8" viewBox="0 0 8 8" ><path d="M0.5 3.5L4 0.5L7.5 3.5M0.5 7.5L4 4.5L7.5 7.5" fill="none" stroke="#4a72b5" stroke-width="1.3"/></svg>
<div style="left:4px;top:340px;width:275px;height:24px;background:#dedede"></div>
<svg style="left:15px;top:343px" width="17" height="15" viewBox="0 0 17 15" ><rect x="1" y="1.2" width="15.5" height="12.6" fill="#3f5275" opacity="0.75"/><rect x="0.5" y="0.5" width="15" height="12" fill="#fbfcff" stroke="#7486ad"/><rect x="0.5" y="0.5" width="15" height="3" fill="#aab7d9" stroke="#6a7db3"/><path d="M2 2H4.5M7 2H9.5M12 2H14.5" stroke="#dfe5f4" stroke-width="0.8"/><path d="M5.5 1V12M10.5 1V12M1 6.5H15M1 9.5H15" stroke="#93a0c0"/><path d="M11 4h4v8h-4z" fill="#c9d5f3" opacity="0.45"/></svg>
<span class="t" style="left:42.00px;top:346.39px;font-size:11px;line-height:11px;color:#000;transform:scaleX(1.0446);transform-origin:0 0;">Жанр довідкова література : таблица</span>
<svg style="left:13px;top:368px" width="17" height="15" viewBox="0 0 17 15" ><rect x="0.5" y="0.5" width="13" height="11" fill="#eef1fa" stroke="#5a6ea6"/><rect x="0.5" y="0.5" width="13" height="3" fill="#5c70ac"/><rect x="0.5" y="0.5" width="3" height="11" fill="#5c70ac"/><rect x="4.5" y="1.5" width="1" height="1" fill="#dfe5f6"/><rect x="6.7" y="1.5" width="1" height="1" fill="#dfe5f6"/><rect x="8.9" y="1.5" width="1" height="1" fill="#dfe5f6"/><rect x="11.100000000000001" y="1.5" width="1" height="1" fill="#dfe5f6"/><rect x="1.5" y="4.5" width="1" height="1" fill="#dfe5f6"/><rect x="1.5" y="6.8" width="1" height="1" fill="#dfe5f6"/><rect x="1.5" y="9.1" width="1" height="1" fill="#dfe5f6"/><rect x="4.7" y="4.8" width="1" height="1" fill="#aab4d2"/><rect x="4.7" y="7.0" width="1" height="1" fill="#aab4d2"/><rect x="4.7" y="9.2" width="1" height="1" fill="#aab4d2"/><rect x="6.9" y="4.8" width="1" height="1" fill="#aab4d2"/><rect x="6.9" y="7.0" width="1" height="1" fill="#aab4d2"/><rect x="6.9" y="9.2" width="1" height="1" fill="#aab4d2"/><rect x="9.100000000000001" y="4.8" width="1" height="1" fill="#aab4d2"/><rect x="9.100000000000001" y="7.0" width="1" height="1" fill="#aab4d2"/><rect x="9.100000000000001" y="9.2" width="1" height="1" fill="#aab4d2"/><rect x="11.3" y="4.8" width="1" height="1" fill="#aab4d2"/><rect x="11.3" y="7.0" width="1" height="1" fill="#aab4d2"/><rect x="11.3" y="9.2" width="1" height="1" fill="#aab4d2"/></svg>
<span class="t" style="left:42.00px;top:370.39px;font-size:11px;line-height:11px;color:#000;transform:scaleX(1.0476);transform-origin:0 0;">Жанр довідкова література_перекрестный</span>
<svg style="left:15px;top:391px" width="17" height="15" viewBox="0 0 17 15" ><rect x="1" y="1.2" width="14.5" height="13.6" fill="#3f5275" opacity="0.7"/><rect x="0.5" y="0.5" width="14" height="13" fill="url(#gPage)" stroke="#76839f"/><rect x="0.5" y="0.5" width="14" height="2.4" fill="#dc8eac" stroke="#c44f7a" stroke-width="0.8"/><rect x="2.3" y="4.8" width="3.4" height="1" fill="#5877b0"/><rect x="2.3" y="8.8" width="3.4" height="1" fill="#5877b0"/><rect x="7.5" y="4.3" width="4.6" height="2.3" fill="#e9edf7" stroke="#5c6a8a" stroke-width="0.9"/><rect x="7.5" y="8.3" width="4.6" height="2.3" fill="#e9edf7" stroke="#5c6a8a" stroke-width="0.9"/></svg>
<span class="t" style="left:42.00px;top:394.39px;font-size:11px;line-height:11px;color:#000;transform:scaleX(1.0868);transform-origin:0 0;">Жанр довідниковий</span>
<div style="left:4px;top:412px;width:275px;height:1px;background:#5f92d8"></div>
<div style="left:4px;top:413px;width:275px;height:1px;background:#fff"></div>
<div style="left:4px;top:414px;width:275px;height:16px;background:linear-gradient(90deg,#d5e5fa 0,#deebfc 45%,#d8e7fb 100%)"></div>
<div style="left:4px;top:430px;width:275px;height:1px;background:#a9cbf5"></div>
<span class="t" style="left:13.00px;top:416.02px;font-size:12.5px;line-height:12.5px;color:#15428b;font-weight:bold;transform:scaleX(0.9010);transform-origin:0 0;">Жанр ділова література</span>
<svg style="left:259px;top:418px" width="8" height="8" viewBox="0 0 8 8" ><path d="M0.5 3.5L4 0.5L7.5 3.5M0.5 7.5L4 4.5L7.5 7.5" fill="none" stroke="#4a72b5" stroke-width="1.3"/></svg>
<svg style="left:15px;top:434px" width="17" height="15" viewBox="0 0 17 15" ><rect x="1" y="1.2" width="15.5" height="12.6" fill="#3f5275" opacity="0.75"/><rect x="0.5" y="0.5" width="15" height="12" fill="#fbfcff" stroke="#7486ad"/><rect x="0.5" y="0.5" width="15" height="3" fill="#aab7d9" stroke="#6a7db3"/><path d="M2 2H4.5M7 2H9.5M12 2H14.5" stroke="#dfe5f4" stroke-width="0.8"/><path d="M5.5 1V12M10.5 1V12M1 6.5H15M1 9.5H15" stroke="#93a0c0"/><path d="M11 4h4v8h-4z" fill="#c9d5f3" opacity="0.45"/></svg>
<span class="t" style="left:42.00px;top:437.39px;font-size:11px;line-height:11px;color:#000;transform:scaleX(1.0362);transform-origin:0 0;">Жанр ділова література : таблица</span>
<svg style="left:15px;top:458.5px" width="17" height="15" viewBox="0 0 17 15" ><rect x="6" y="1.2" width="10.5" height="10.3" fill="#34495e" opacity="0.7"/><rect x="5.5" y="0.5" width="10" height="9.8" fill="#fbfcfe" stroke="#5b7385"/><rect x="5.5" y="0.5" width="10" height="2.4" fill="#5fa3a3" stroke="#357f80" stroke-width="0.8"/><rect x="7" y="4" width="2" height="1" fill="#9aa5b8"/><rect x="11" y="4" width="2" height="1" fill="#9aa5b8"/><rect x="7" y="6" width="2" height="1" fill="#9aa5b8"/><rect x="11" y="6" width="2" height="1" fill="#9aa5b8"/><rect x="7" y="8" width="2" height="1" fill="#9aa5b8"/><rect x="11" y="8" width="2" height="1" fill="#9aa5b8"/><rect x="1" y="5.2" width="10.5" height="10.3" fill="#34495e" opacity="0.7"/><rect x="0.5" y="4.5" width="10" height="9.8" fill="#fbfcfe" stroke="#5b7385"/><rect x="0.5" y="4.5" width="10" height="2.4" fill="#5fa3a3" stroke="#357f80" stroke-width="0.8"/><rect x="2" y="8" width="2" height="1" fill="#9aa5b8"/><rect x="6" y="8" width="2" height="1" fill="#9aa5b8"/><rect x="2" y="10" width="2" height="1" fill="#9aa5b8"/><rect x="6" y="10" width="2" height="1" fill="#9aa5b8"/><rect x="2" y="12" width="2" height="1" fill="#9aa5b8"/><rect x="6" y="12" width="2" height="1" fill="#9aa5b8"/></svg>
<span class="t" style="left:42.00px;top:461.39px;font-size:11px;line-height:11px;color:#000;transform:scaleX(1.0099);transform-origin:0 0;">Запрос1</span>
<svg style="left:15px;top:482px" width="17" height="15" viewBox="0 0 17 15" ><rect x="1" y="1.2" width="14.5" height="13.6" fill="#3f5275" opacity="0.7"/><rect x="0.5" y="0.5" width="14" height="13" fill="url(#gPage)" stroke="#76839f"/><rect x="0.5" y="0.5" width="14" height="2.4" fill="#dc8eac" stroke="#c44f7a" stroke-width="0.8"/><rect x="2.3" y="4.8" width="3.4" height="1" fill="#5877b0"/><rect x="2.3" y="8.8" width="3.4" height="1" fill="#5877b0"/><rect x="7.5" y="4.3" width="4.6" height="2.3" fill="#e9edf7" stroke="#5c6a8a" stroke-width="0.9"/><rect x="7.5" y="8.3" width="4.6" height="2.3" fill="#e9edf7" stroke="#5c6a8a" stroke-width="0.9"/></svg>
<span class="t" style="left:42.00px;top:485.39px;font-size:11px;line-height:11px;color:#000;transform:scaleX(1.0657);transform-origin:0 0;">Жанр діловий</span>
<div style="left:4px;top:503px;width:275px;height:1px;background:#5f92d8"></div>
<div style="left:4px;top:504px;width:275px;height:1px;background:#fff"></div>
<div style="left:4px;top:505px;width:275px;height:17px;background:linear-gradient(90deg,#d5e5fa 0,#deebfc 45%,#d8e7fb 100%)"></div>
<div style="left:4px;top:522px;width:275px;height:1px;background:#5f92d8"></div>
<span class="t" style="left:13.00px;top:507.02px;font-size:12.5px;line-height:12.5px;color:#15428b;font-weight:bold;transform:scaleX(0.9195);transform-origin:0 0;">Картки читачів наукова література</span>
<svg style="left:259px;top:509px" width="8" height="8" viewBox="0 0 8 8" ><path d="M0.5 0.5L4 3.5L7.5 0.5M0.5 4.5L4 7.5L7.5 4.5" fill="none" stroke="#4a72b5" stroke-width="1.3"/></svg>
<div style="left:4px;top:523px;width:275px;height:1px;background:#fff"></div>
<div style="left:4px;top:524px;width:275px;height:17px;background:linear-gradient(90deg,#d5e5fa 0,#deebfc 45%,#d8e7fb 100%)"></div>
<div style="left:4px;top:541px;width:275px;height:1px;background:#5f92d8"></div>
<span class="t" style="left:13.00px;top:526.02px;font-size:12.5px;line-height:12.5px;color:#15428b;font-weight:bold;transform:scaleX(0.9188);transform-origin:0 0;">Картки читачів довідкова література</span>
<svg style="left:259px;top:528px" width="8" height="8" viewBox="0 0 8 8" ><path d="M0.5 0.5L4 3.5L7.5 0.5M0.5 4.5L4 7.5L7.5 4.5" fill="none" stroke="#4a72b5" stroke-width="1.3"/></svg>
<div style="left:4px;top:542px;width:275px;height:1px;background:#fff"></div>
<div style="left:4px;top:543px;width:275px;height:17px;background:linear-gradient(90deg,#d5e5fa 0,#deebfc 45%,#d8e7fb 100%)"></div>
<div style="left:4px;top:560px;width:275px;height:1px;background:#5f92d8"></div>
<span class="t" style="left:13.00px;top:545.02px;font-size:12.5px;line-height:12.5px;color:#15428b;font-weight:bold;transform:scaleX(0.9131);transform-origin:0 0;">Картки читачів ділова література</span>
<svg style="left:259px;top:547px" width="8" height="8" viewBox="0 0 8 8" ><path d="M0.5 0.5L4 3.5L7.5 0.5M0.5 4.5L4 7.5L7.5 4.5" fill="none" stroke="#4a72b5" stroke-width="1.3"/></svg>
<div style="left:4px;top:561px;width:275px;height:1px;background:#fff"></div>
<div style="left:4px;top:562px;width:275px;height:17px;background:linear-gradient(90deg,#d5e5fa 0,#deebfc 45%,#d8e7fb 100%)"></div>
<div style="left:4px;top:579px;width:275px;height:1px;background:#5f92d8"></div>
<span class="t" style="left:13.00px;top:564.02px;font-size:12.5px;line-height:12.5px;color:#15428b;font-weight:bold;transform:scaleX(0.9483);transform-origin:0 0;">Жанр комп&#x27;ютери та інтернет</span>
<svg style="left:259px;top:566px" width="8" height="8" viewBox="0 0 8 8" ><path d="M0.5 0.5L4 3.5L7.5 0.5M0.5 4.5L4 7.5L7.5 4.5" fill="none" stroke="#4a72b5" stroke-width="1.3"/></svg>
<div style="left:4px;top:580px;width:275px;height:1px;background:#fff"></div>
<div style="left:4px;top:581px;width:275px;height:16px;background:linear-gradient(90deg,#d5e5fa 0,#deebfc 45%,#d8e7fb 100%)"></div>
<div style="left:4px;top:597px;width:275px;height:1px;background:#a9cbf5"></div>
<span class="t" style="left:13.00px;top:583.02px;font-size:12.5px;line-height:12.5px;color:#15428b;font-weight:bold;transform:scaleX(0.9426);transform-origin:0 0;">Несвязанные объекты</span>
<svg style="left:259px;top:585px" width="8" height="8" viewBox="0 0 8 8" ><path d="M0.5 3.5L4 0.5L7.5 3.5M0.5 7.5L4 4.5L7.5 7.5" fill="none" stroke="#4a72b5" stroke-width="1.3"/></svg>
<svg style="left:15px;top:601px" width="17" height="15" viewBox="0 0 17 15" ><rect x="1" y="1.2" width="14.5" height="13.6" fill="#3f5275" opacity="0.7"/><rect x="0.5" y="0.5" width="14" height="13" fill="url(#gPage)" stroke="#76839f"/><rect x="0.5" y="0.5" width="14" height="2.4" fill="#dc8eac" stroke="#c44f7a" stroke-width="0.8"/><rect x="2.3" y="4.8" width="3.4" height="1" fill="#5877b0"/><rect x="2.3" y="8.8" width="3.4" height="1" fill="#5877b0"/><rect x="7.5" y="4.3" width="4.6" height="2.3" fill="#e9edf7" stroke="#5c6a8a" stroke-width="0.9"/><rect x="7.5" y="8.3" width="4.6" height="2.3" fill="#e9edf7" stroke="#5c6a8a" stroke-width="0.9"/></svg>
<span class="t" style="left:42.00px;top:604.39px;font-size:11px;line-height:11px;color:#000;transform:scaleX(0.9754);transform-origin:0 0;">Form1</span>
<svg style="left:15px;top:625px" width="17" height="15" viewBox="0 0 17 15" ><rect x="1" y="1.2" width="14.5" height="13.6" fill="#3f5275" opacity="0.7"/><rect x="0.5" y="0.5" width="14" height="13" fill="url(#gPage)" stroke="#76839f"/><rect x="0.5" y="0.5" width="14" height="2.4" fill="#dc8eac" stroke="#c44f7a" stroke-width="0.8"/><rect x="2.3" y="4.8" width="3.4" height="1" fill="#5877b0"/><rect x="2.3" y="8.8" width="3.4" height="1" fill="#5877b0"/><rect x="7.5" y="4.3" width="4.6" height="2.3" fill="#e9edf7" stroke="#5c6a8a" stroke-width="0.9"/><rect x="7.5" y="8.3" width="4.6" height="2.3" fill="#e9edf7" stroke="#5c6a8a" stroke-width="0.9"/></svg>
<span class="t" style="left:42.00px;top:628.39px;font-size:11px;line-height:11px;color:#000;transform:scaleX(1.0069);transform-origin:0 0;">Form2</span>
<div style="left:0px;top:971px;width:285px;height:2px;background:#5585cd"></div>
<div style="left:285px;top:144px;width:995px;height:23px;background:#86a9db"></div>
<div style="left:285px;top:166px;width:995px;height:1px;background:#6c98da"></div>
<div style="left:285px;top:167px;width:995px;height:786px;background:#fff"></div>
<svg style="left:285px;top:144px" width="196" height="23" viewBox="0 0 196 23" ><defs><linearGradient id="it" x1="0" y1="0" x2="0" y2="1"><stop offset="0" stop-color="#d5e6fd"/><stop offset="0.45" stop-color="#bdd8fc"/><stop offset="0.5" stop-color="#a4c7f7"/><stop offset="1" stop-color="#9cc2f5"/></linearGradient></defs><path d="M0.5 23 V4.5 a4 4 0 0 1 4-4 H177 C183 0.5 185 5 187 10 C189 16 191 21 195 23 Z" fill="url(#it)" stroke="#6f9be0" stroke-width="1"/><path d="M1.5 22 V5 a3.5 3.5 0 0 1 3.5-3.5 H177" fill="none" stroke="#eef5ff" stroke-width="1"/></svg>
<svg style="left:291px;top:148px" width="16" height="14" viewBox="0 0 16 14" ><rect x="1" y="1" width="15" height="12.5" fill="#4a5f8c" opacity="0.7"/><rect x="0.5" y="0.5" width="14.5" height="12" fill="#fbfcff" stroke="#7f8db0"/><rect x="0.5" y="0.5" width="14.5" height="3" fill="#aab6d8" stroke="#6f82bd"/><path d="M5.5 1V12M10.5 1V12M1 6.5H15M1 9.5H15" stroke="#9aa6c4"/></svg>
<span class="t" style="left:315.00px;top:150.19px;font-size:11px;line-height:11px;color:#000;transform:scaleX(1.0466);transform-origin:0 0;">Жанр довідкова література</span>
<svg style="left:469px;top:143px" width="288" height="24" viewBox="0 0 288 24" ><defs><linearGradient id="ot" x1="0" y1="0" x2="0" y2="1"><stop offset="0" stop-color="#fbd9a6"/><stop offset="0.4" stop-color="#fdc679"/><stop offset="0.5" stop-color="#ffb956"/><stop offset="0.8" stop-color="#ffc96a"/><stop offset="1" stop-color="#ffdb8b"/></linearGradient></defs><path d="M3.5 24.5 V5.5 a5 5 0 0 1 5-5 H259 C267 0.5 269 5 272 11 C275 17 278 23 284 24.5 Z" fill="url(#ot)"/><path d="M3.5 24.5 V5.5 a5 5 0 0 1 5-5 H259 C267 0.5 269 5 272 11 C275 17 278 23 284 24.5" fill="none" stroke="#a07c48" stroke-width="1"/></svg>
<svg style="left:478px;top:147px" width="17" height="15" viewBox="0 0 17 15" ><rect x="6" y="1.2" width="10.5" height="10.3" fill="#34495e" opacity="0.7"/><rect x="5.5" y="0.5" width="10" height="9.8" fill="#fbfcfe" stroke="#5b7385"/><rect x="5.5" y="0.5" width="10" height="2.4" fill="#5fa3a3" stroke="#357f80" stroke-width="0.8"/><rect x="7" y="4" width="2" height="1" fill="#9aa5b8"/><rect x="11" y="4" width="2" height="1" fill="#9aa5b8"/><rect x="7" y="6" width="2" height="1" fill="#9aa5b8"/><rect x="11" y="6" width="2" height="1" fill="#9aa5b8"/><rect x="7" y="8" width="2" height="1" fill="#9aa5b8"/><rect x="11" y="8" width="2" height="1" fill="#9aa5b8"/><rect x="1" y="5.2" width="10.5" height="10.3" fill="#34495e" opacity="0.7"/><rect x="0.5" y="4.5" width="10" height="9.8" fill="#fbfcfe" stroke="#5b7385"/><rect x="0.5" y="4.5" width="10" height="2.4" fill="#5fa3a3" stroke="#357f80" stroke-width="0.8"/><rect x="2" y="8" width="2" height="1" fill="#9aa5b8"/><rect x="6" y="8" width="2" height="1" fill="#9aa5b8"/><rect x="2" y="10" width="2" height="1" fill="#9aa5b8"/><rect x="6" y="10" width="2" height="1" fill="#9aa5b8"/><rect x="2" y="12" width="2" height="1" fill="#9aa5b8"/><rect x="6" y="12" width="2" height="1" fill="#9aa5b8"/></svg>
<span class="t" style="left:501.70px;top:149.99px;font-size:11px;line-height:11px;color:#000;font-weight:bold;transform:scaleX(0.9933);transform-origin:0 0;">Жанр довідкова література_перекрестный</span>
<svg style="left:1263px;top:150px" width="10" height="10" viewBox="0 0 10 10" ><path d="M1.5 1.5L8.5 8.5M8.5 1.5L1.5 8.5" stroke="#111" stroke-width="1.7"/></svg>
<div style="left:285px;top:167px;width:19px;height:20px;background:#a8c3ea;border:1px solid #b4cff5;border-bottom-width:2px"></div>
<svg style="left:288px;top:170px" width="14" height="14" viewBox="0 0 14 14" ><defs><linearGradient id="sa" x1="0" y1="0" x2="1" y2="1"><stop offset="0.4" stop-color="#ffffff"/><stop offset="1" stop-color="#c9cdd6"/></linearGradient></defs><path d="M12 2.2V13H1.5Z" fill="url(#sa)"/></svg>
<div style="left:304px;top:167px;width:362px;height:20px;background:linear-gradient(#f9d9a0 0,#f7d08b 40%,#f3c46c 70%,#f0bd5c 100%);border-right:1px solid #a9c1e6"></div>
<span class="t" style="left:442.80px;top:171.42px;font-size:12.5px;line-height:12.5px;color:#555d63;transform:scaleX(1.0590);transform-origin:50% 0;">Назва книги</span>
<svg style="left:652px;top:175px" width="10" height="6" viewBox="0 0 10 6" ><path d="M0.3 0.3h9L4.8 5.5z" fill="#fff"/><path d="M1.6 0.6h6.4L4.8 4z" fill="#262b33"/></svg>
<div style="left:666px;top:167px;width:183px;height:20px;background:linear-gradient(#f5f8fc 0,#e6ecf5 45%,#dce4f0 55%,#d5dfee 100%);border-right:1px solid #aec4e6;border-left:1px solid #fbfcfe"></div>
<span class="t" style="left:669.30px;top:171.42px;font-size:12.5px;line-height:12.5px;color:#3a4560;transform:scaleX(1.1050);transform-origin:0 0;">Итоговое значение Номе</span>
<svg style="left:835px;top:175px" width="10" height="6" viewBox="0 0 10 6" ><path d="M0.3 0.3h9L4.8 5.5z" fill="#fff"/><path d="M1.6 0.6h6.4L4.8 4z" fill="#262b33"/></svg>
<div style="left:849px;top:167px;width:94px;height:20px;background:linear-gradient(#f5f8fc 0,#e6ecf5 45%,#dce4f0 55%,#d5dfee 100%);border-right:1px solid #aec4e6;border-left:1px solid #fbfcfe"></div>
<span class="t" style="left:852.30px;top:171.42px;font-size:12.5px;line-height:12.5px;color:#3a4560;transform:scaleX(1.0341);transform-origin:0 0;">Брокгауз Ф_</span>
<svg style="left:929px;top:175px" width="10" height="6" viewBox="0 0 10 6" ><path d="M0.3 0.3h9L4.8 5.5z" fill="#fff"/><path d="M1.6 0.6h6.4L4.8 4z" fill="#262b33"/></svg>
<div style="left:943px;top:167px;width:94px;height:20px;background:linear-gradient(#f5f8fc 0,#e6ecf5 45%,#dce4f0 55%,#d5dfee 100%);border-right:1px solid #aec4e6;border-left:1px solid #fbfcfe"></div>
<span class="t" style="left:946.30px;top:171.42px;font-size:12.5px;line-height:12.5px;color:#3a4560;transform:scaleX(1.0810);transform-origin:0 0;">Бьюзен Тон</span>
<svg style="left:1023px;top:175px" width="10" height="6" viewBox="0 0 10 6" ><path d="M0.3 0.3h9L4.8 5.5z" fill="#fff"/><path d="M1.6 0.6h6.4L4.8 4z" fill="#262b33"/></svg>
<div style="left:1037px;top:167px;width:94px;height:20px;background:linear-gradient(#f5f8fc 0,#e6ecf5 45%,#dce4f0 55%,#d5dfee 100%);border-right:1px solid #aec4e6;border-left:1px solid #fbfcfe"></div>
<span class="t" style="left:1040.00px;top:171.42px;font-size:12.5px;line-height:12.5px;color:#3a4560;transform:scaleX(1.0767);transform-origin:0 0;">Емельянов</span>
<svg style="left:1117px;top:175px" width="10" height="6" viewBox="0 0 10 6" ><path d="M0.3 0.3h9L4.8 5.5z" fill="#fff"/><path d="M1.6 0.6h6.4L4.8 4z" fill="#262b33"/></svg>
<div style="left:1131px;top:167px;width:94px;height:20px;background:linear-gradient(#f5f8fc 0,#e6ecf5 45%,#dce4f0 55%,#d5dfee 100%);border-right:1px solid #aec4e6;border-left:1px solid #fbfcfe"></div>
<span class="t" style="left:1134.30px;top:171.42px;font-size:12.5px;line-height:12.5px;color:#3a4560;transform:scaleX(1.0082);transform-origin:0 0;">МОДЕСТОВ</span>
<svg style="left:1211px;top:175px" width="10" height="6" viewBox="0 0 10 6" ><path d="M0.3 0.3h9L4.8 5.5z" fill="#fff"/><path d="M1.6 0.6h6.4L4.8 4z" fill="#262b33"/></svg>
<div style="left:285px;top:186px;width:940px;height:1px;background:#c5d2e6"></div>
<div style="left:304px;top:186px;width:362px;height:1px;background:#eab95a"></div>
<div style="left:304px;top:187px;width:921px;height:19px;background:#e9ecf5"></div>
<div style="left:285px;top:187px;width:19px;height:20px;background:#fdd58b;border-right:1px solid #f0c070"></div>
<div style="left:304px;top:206px;width:921px;height:1px;background:#cdd6e6"></div>
<div style="left:665px;top:187px;width:1px;height:20px;background:#cdd6e6"></div>
<div style="left:848px;top:187px;width:1px;height:20px;background:#cdd6e6"></div>
<div style="left:942px;top:187px;width:1px;height:20px;background:#cdd6e6"></div>
<div style="left:1036px;top:187px;width:1px;height:20px;background:#cdd6e6"></div>
<div style="left:1130px;top:187px;width:1px;height:20px;background:#cdd6e6"></div>
<div style="left:1224px;top:187px;width:1px;height:20px;background:#cdd6e6"></div>
<span class="t" style="left:840.55px;top:192.42px;font-size:12.5px;line-height:12.5px;color:#262626;">1</span>
<span class="t" style="left:1216.55px;top:192.42px;font-size:12.5px;line-height:12.5px;color:#262626;">1</span>
<div style="left:304px;top:207px;width:921px;height:19px;background:#f3f3f3"></div>
<div style="left:285px;top:207px;width:19px;height:20px;background:#e4ebf7;border-right:1px solid #aebfda;border-bottom:1px solid #b9c9e2"></div>
<div style="left:304px;top:226px;width:921px;height:1px;background:#cdd6e6"></div>
<div style="left:665px;top:207px;width:1px;height:20px;background:#cdd6e6"></div>
<div style="left:848px;top:207px;width:1px;height:20px;background:#cdd6e6"></div>
<div style="left:942px;top:207px;width:1px;height:20px;background:#cdd6e6"></div>
<div style="left:1036px;top:207px;width:1px;height:20px;background:#cdd6e6"></div>
<div style="left:1130px;top:207px;width:1px;height:20px;background:#cdd6e6"></div>
<div style="left:1224px;top:207px;width:1px;height:20px;background:#cdd6e6"></div>
<span class="t" style="left:306.70px;top:212.42px;font-size:12.5px;line-height:12.5px;color:#2e2e2e;transform:scaleX(1.1081);transform-origin:0 0;">Супермышление</span>
<span class="t" style="left:840.55px;top:212.42px;font-size:12.5px;line-height:12.5px;color:#262626;">1</span>
<span class="t" style="left:1028.55px;top:212.42px;font-size:12.5px;line-height:12.5px;color:#262626;">1</span>
<div style="left:304px;top:227px;width:921px;height:19px;background:#ffffff"></div>
<div style="left:285px;top:227px;width:19px;height:20px;background:#e4ebf7;border-right:1px solid #aebfda;border-bottom:1px solid #b9c9e2"></div>
<div style="left:304px;top:246px;width:921px;height:1px;background:#cdd6e6"></div>
<div style="left:665px;top:227px;width:1px;height:20px;background:#cdd6e6"></div>
<div style="left:848px;top:227px;width:1px;height:20px;background:#cdd6e6"></div>
<div style="left:942px;top:227px;width:1px;height:20px;background:#cdd6e6"></div>
<div style="left:1036px;top:227px;width:1px;height:20px;background:#cdd6e6"></div>
<div style="left:1130px;top:227px;width:1px;height:20px;background:#cdd6e6"></div>
<div style="left:1224px;top:227px;width:1px;height:20px;background:#cdd6e6"></div>
<span class="t" style="left:306.70px;top:232.42px;font-size:12.5px;line-height:12.5px;color:#2e2e2e;transform:scaleX(1.1069);transform-origin:0 0;">Экскурсоведение. Учебник</span>
<span class="t" style="left:840.55px;top:232.42px;font-size:12.5px;line-height:12.5px;color:#262626;">1</span>
<span class="t" style="left:1122.55px;top:232.42px;font-size:12.5px;line-height:12.5px;color:#262626;">1</span>
<div style="left:304px;top:247px;width:921px;height:19px;background:#f3f3f3"></div>
<div style="left:285px;top:247px;width:19px;height:20px;background:#e4ebf7;border-right:1px solid #aebfda;border-bottom:1px solid #b9c9e2"></div>
<div style="left:304px;top:266px;width:921px;height:1px;background:#cdd6e6"></div>
<div style="left:665px;top:247px;width:1px;height:20px;background:#cdd6e6"></div>
<div style="left:848px;top:247px;width:1px;height:20px;background:#cdd6e6"></div>
<div style="left:942px;top:247px;width:1px;height:20px;background:#cdd6e6"></div>
<div style="left:1036px;top:247px;width:1px;height:20px;background:#cdd6e6"></div>
<div style="left:1130px;top:247px;width:1px;height:20px;background:#cdd6e6"></div>
<div style="left:1224px;top:247px;width:1px;height:20px;background:#cdd6e6"></div>
<span class="t" style="left:306.70px;top:252.42px;font-size:12.5px;line-height:12.5px;color:#2e2e2e;transform:scaleX(1.0935);transform-origin:0 0;">Энциклопедический словарь (Л)</span>
<span class="t" style="left:840.55px;top:252.42px;font-size:12.5px;line-height:12.5px;color:#262626;">1</span>
<span class="t" style="left:934.55px;top:252.42px;font-size:12.5px;line-height:12.5px;color:#262626;">1</span>
<div style="left:303px;top:186px;width:364px;height:22px;border:solid #fbb75d;border-width:1px 2px 2px 1px;background:#fff"></div>
<div style="left:308px;top:188px;width:353px;height:18px;background:#000"></div>
<span class="t" style="left:308.00px;top:192.02px;font-size:12.5px;line-height:12.5px;color:#fff;transform:scaleX(1.0154);transform-origin:0 0;">КРАТКИЙ СЛОВАРЬ ТРУДНОСТЕЙ АНГЛИЙСКОГО ЯЗЫКА</span>
<div style="left:285px;top:267px;width:19px;height:685px;background:#f7f8fd"></div>
<div style="left:1225px;top:167px;width:55px;height:20px;background:#f6f7fc"></div>
<div style="left:303px;top:267px;width:1px;height:685px;background:#eef0f7"></div>
<div style="left:665px;top:267px;width:1px;height:685px;background:#eef0f7"></div>
<div style="left:848px;top:267px;width:1px;height:685px;background:#eef0f7"></div>
<div style="left:942px;top:267px;width:1px;height:685px;background:#eef0f7"></div>
<div style="left:1036px;top:267px;width:1px;height:685px;background:#eef0f7"></div>
<div style="left:1130px;top:267px;width:1px;height:685px;background:#eef0f7"></div>
<div style="left:1224px;top:267px;width:1px;height:685px;background:#eef0f7"></div>
<div style="left:1225px;top:206px;width:55px;height:1px;background:#f0f2f8"></div>
<div style="left:1225px;top:226px;width:55px;height:1px;background:#f0f2f8"></div>
<div style="left:1225px;top:246px;width:55px;height:1px;background:#f0f2f8"></div>
<div style="left:1225px;top:266px;width:55px;height:1px;background:#f0f2f8"></div>
<div style="left:304px;top:286px;width:976px;height:1px;background:#f2f4f9"></div>
<div style="left:285px;top:286px;width:19px;height:1px;background:#e8ebf3"></div>
<div style="left:304px;top:306px;width:976px;height:1px;background:#f2f4f9"></div>
<div style="left:285px;top:306px;width:19px;height:1px;background:#e8ebf3"></div>
<div style="left:304px;top:326px;width:976px;height:1px;background:#f2f4f9"></div>
<div style="left:285px;top:326px;width:19px;height:1px;background:#e8ebf3"></div>
<div style="left:304px;top:346px;width:976px;height:1px;background:#f2f4f9"></div>
<div style="left:285px;top:346px;width:19px;height:1px;background:#e8ebf3"></div>
<div style="left:304px;top:366px;width:976px;height:1px;background:#f2f4f9"></div>
<div style="left:285px;top:366px;width:19px;height:1px;background:#e8ebf3"></div>
<div style="left:304px;top:386px;width:976px;height:1px;background:#f2f4f9"></div>
<div style="left:285px;top:386px;width:19px;height:1px;background:#e8ebf3"></div>
<div style="left:304px;top:406px;width:976px;height:1px;background:#f2f4f9"></div>
<div style="left:285px;top:406px;width:19px;height:1px;background:#e8ebf3"></div>
<div style="left:304px;top:426px;width:976px;height:1px;background:#f2f4f9"></div>
<div style="left:285px;top:426px;width:19px;height:1px;background:#e8ebf3"></div>
<div style="left:304px;top:446px;width:976px;height:1px;background:#f2f4f9"></div>
<div style="left:285px;top:446px;width:19px;height:1px;background:#e8ebf3"></div>
<div style="left:304px;top:466px;width:976px;height:1px;background:#f2f4f9"></div>
<div style="left:285px;top:466px;width:19px;height:1px;background:#e8ebf3"></div>
<div style="left:304px;top:486px;width:976px;height:1px;background:#f2f4f9"></div>
<div style="left:285px;top:486px;width:19px;height:1px;background:#e8ebf3"></div>
<div style="left:304px;top:506px;width:976px;height:1px;background:#f2f4f9"></div>
<div style="left:285px;top:506px;width:19px;height:1px;background:#e8ebf3"></div>
<div style="left:304px;top:526px;width:976px;height:1px;background:#f2f4f9"></div>
<div style="left:285px;top:526px;width:19px;height:1px;background:#e8ebf3"></div>
<div style="left:304px;top:546px;width:976px;height:1px;background:#f2f4f9"></div>
<div style="left:285px;top:546px;width:19px;height:1px;background:#e8ebf3"></div>
<div style="left:304px;top:566px;width:976px;height:1px;background:#f2f4f9"></div>
<div style="left:285px;top:566px;width:19px;height:1px;background:#e8ebf3"></div>
<div style="left:304px;top:586px;width:976px;height:1px;background:#f2f4f9"></div>
<div style="left:285px;top:586px;width:19px;height:1px;background:#e8ebf3"></div>
<div style="left:304px;top:606px;width:976px;height:1px;background:#f2f4f9"></div>
<div style="left:285px;top:606px;width:19px;height:1px;background:#e8ebf3"></div>
<div style="left:304px;top:626px;width:976px;height:1px;background:#f2f4f9"></div>
<div style="left:285px;top:626px;width:19px;height:1px;background:#e8ebf3"></div>
<div style="left:304px;top:646px;width:976px;height:1px;background:#f2f4f9"></div>
<div style="left:285px;top:646px;width:19px;height:1px;background:#e8ebf3"></div>
<div style="left:304px;top:666px;width:976px;height:1px;background:#f2f4f9"></div>
<div style="left:285px;top:666px;width:19px;height:1px;background:#e8ebf3"></div>
<div style="left:304px;top:686px;width:976px;height:1px;background:#f2f4f9"></div>
<div style="left:285px;top:686px;width:19px;height:1px;background:#e8ebf3"></div>
<div style="left:304px;top:706px;width:976px;height:1px;background:#f2f4f9"></div>
<div style="left:285px;top:706px;width:19px;height:1px;background:#e8ebf3"></div>
<div style="left:304px;top:726px;width:976px;height:1px;background:#f2f4f9"></div>
<div style="left:285px;top:726px;width:19px;height:1px;background:#e8ebf3"></div>
<div style="left:304px;top:746px;width:976px;height:1px;background:#f2f4f9"></div>
<div style="left:285px;top:746px;width:19px;height:1px;background:#e8ebf3"></div>
<div style="left:304px;top:766px;width:976px;height:1px;background:#f2f4f9"></div>
<div style="left:285px;top:766px;width:19px;height:1px;background:#e8ebf3"></div>
<div style="left:304px;top:786px;width:976px;height:1px;background:#f2f4f9"></div>
<div style="left:285px;top:786px;width:19px;height:1px;background:#e8ebf3"></div>
<div style="left:304px;top:806px;width:976px;height:1px;background:#f2f4f9"></div>
<div style="left:285px;top:806px;width:19px;height:1px;background:#e8ebf3"></div>
<div style="left:304px;top:826px;width:976px;height:1px;background:#f2f4f9"></div>
<div style="left:285px;top:826px;width:19px;height:1px;background:#e8ebf3"></div>
<div style="left:304px;top:846px;width:976px;height:1px;background:#f2f4f9"></div>
<div style="left:285px;top:846px;width:19px;height:1px;background:#e8ebf3"></div>
<div style="left:304px;top:866px;width:976px;height:1px;background:#f2f4f9"></div>
<div style="left:285px;top:866px;width:19px;height:1px;background:#e8ebf3"></div>
<div style="left:304px;top:886px;width:976px;height:1px;background:#f2f4f9"></div>
<div style="left:285px;top:886px;width:19px;height:1px;background:#e8ebf3"></div>
<div style="left:304px;top:906px;width:976px;height:1px;background:#f2f4f9"></div>
<div style="left:285px;top:906px;width:19px;height:1px;background:#e8ebf3"></div>
<div style="left:304px;top:926px;width:976px;height:1px;background:#f2f4f9"></div>
<div style="left:285px;top:926px;width:19px;height:1px;background:#e8ebf3"></div>
<div style="left:304px;top:946px;width:976px;height:1px;background:#f2f4f9"></div>
<div style="left:285px;top:946px;width:19px;height:1px;background:#e8ebf3"></div>
<div style="left:285px;top:953px;width:995px;height:20px;background:linear-gradient(#e8f0fc 0,#e3edfc 9px,#d8e6fb 10px,#d6e5fb 100%);border-top:1px solid #7aa3e2;border-bottom:1px solid #5a8ad6"></div>
<span class="t" style="left:290.00px;top:957.89px;font-size:11px;line-height:11px;color:#1e2b52;transform:scaleX(0.9960);transform-origin:0 0;">Запись:</span>
<svg style="left:337px;top:959px" width="9" height="8" viewBox="0 0 9 8" ><rect x="0.5" y="0.3" width="1.6" height="7.4" fill="#1f3c8c"/><path d="M7.5 0.3V7.7L2.8 4z" fill="#1f3c8c"/></svg>
<svg style="left:354px;top:959px" width="7" height="8" viewBox="0 0 7 8" ><path d="M5.5 0.3V7.7L0.8 4z" fill="#aebad2"/></svg>
<div style="left:365px;top:955px;width:50px;height:16px;background:#eaf2fd;border:1px solid #a9c3e8"></div>
<span class="t" style="left:367.00px;top:957.89px;font-size:11px;line-height:11px;color:#111;">1 из 4</span>
<svg style="left:423px;top:959px" width="7" height="8" viewBox="0 0 7 8" ><path d="M0.8 0.3V7.7L5.5 4z" fill="#1f3c8c"/></svg>
<svg style="left:440px;top:959px" width="9" height="8" viewBox="0 0 9 8" ><path d="M0.5 0.3V7.7L5.2 4z" fill="#1f3c8c"/><rect x="5.9" y="0.3" width="1.6" height="7.4" fill="#1f3c8c"/></svg>
<svg style="left:455px;top:958px" width="12" height="9" viewBox="0 0 12 9" ><path d="M0.5 1.3V8.7L5.2 5z" fill="#aebad2"/><rect x="5.9" y="1.3" width="1.2" height="7.4" fill="#aebad2"/><path d="M9 1v4M7 3h4M7.6 1.6l2.8 2.8M10.4 1.6L7.6 4.4" stroke="#e8d79a" stroke-width="0.9"/></svg>
<div style="left:472px;top:953px;width:1px;height:19px;background:#9bbce9"></div>
<div style="left:473px;top:953px;width:1px;height:19px;background:#f2f7fe"></div>
<svg style="left:481px;top:957px" width="16" height="13" viewBox="0 0 16 13" ><path d="M1 1h11L8 6v5.5L5.5 9.5V6z" fill="#d5dbe6" stroke="#a4aec2" stroke-width="1"/><path d="M8.5 3.5l6 7M14.5 3.5l-6 7" stroke="#a9b1c3" stroke-width="1.6"/></svg>
<span class="t" style="left:499.50px;top:957.89px;font-size:11px;line-height:11px;color:#9aa0ab;transform:scaleX(1.0219);transform-origin:0 0;">Нет фильтра</span>
<div style="left:576px;top:953px;width:1px;height:19px;background:#9bbce9"></div>
<div style="left:577px;top:953px;width:1px;height:19px;background:#f2f7fe"></div>
<div style="left:582px;top:955px;width:70px;height:16px;background:#edf4fd;border:1px solid #a9c3e8"></div>
<span class="t" style="left:585.00px;top:957.89px;font-size:11px;line-height:11px;color:#111;transform:scaleX(1.0497);transform-origin:0 0;">Поиск</span>
<div style="left:0px;top:973px;width:1280px;height:21px;background:linear-gradient(#ffffff 0,#ffffff 1px,#dce9fb 1px,#d2e2fa 6px,#b5d0f5 7px,#b3cef5 10px,#c2d8f7 15px,#d3e3f9 20px,#d8e7fb 21px)"></div>
<div style="left:638px;top:975px;width:1px;height:18px;background:#8fb0e2"></div>
<div style="left:639px;top:975px;width:1px;height:18px;background:#eef5fe"></div>
<span class="t" style="left:8.00px;top:977.99px;font-size:11px;line-height:11px;color:#15244f;transform:scaleX(1.0549);transform-origin:0 0;">Режим таблицы</span>
<span class="t" style="left:1122.50px;top:977.99px;font-size:11px;line-height:11px;color:#15244f;">Num Lock</span>
<div style="left:1181px;top:974px;width:1px;height:19px;background:#6f99da"></div>
<div style="left:1182px;top:974px;width:1px;height:19px;background:#e6f0fd"></div>
<div style="left:1183px;top:974px;width:97px;height:19px;background:linear-gradient(#b9d2f4,#a6c4ef 50%,#b4cff3)"></div>
<div style="left:1187px;top:974px;width:92px;height:19px;background:linear-gradient(#d3e3f9,#c3d9f7 45%,#b7d1f5 55%,#c6dbf8);border:1px solid #7aa2de;border-radius:3px"></div>
<div style="left:1188px;top:975px;width:18px;height:17px;background:linear-gradient(#fbdca6 0,#f9cf83 40%,#f5b940 50%,#f9cc66 75%,#fde292 100%);border-radius:2px 0 0 2px"></div>
<div style="left:1206px;top:976px;width:1px;height:15px;background:#a4c1ec"></div>
<div style="left:1207px;top:976px;width:1px;height:15px;background:#d6e5fa"></div>
<div style="left:1224px;top:976px;width:1px;height:15px;background:#a4c1ec"></div>
<div style="left:1225px;top:976px;width:1px;height:15px;background:#d6e5fa"></div>
<div style="left:1242px;top:976px;width:1px;height:15px;background:#a4c1ec"></div>
<div style="left:1243px;top:976px;width:1px;height:15px;background:#d6e5fa"></div>
<div style="left:1260px;top:976px;width:1px;height:15px;background:#a4c1ec"></div>
<div style="left:1261px;top:976px;width:1px;height:15px;background:#d6e5fa"></div>
<svg style="left:1191px;top:978px" width="12" height="11" viewBox="0 0 12 11" ><rect x="0.6" y="0.6" width="10" height="9" fill="#f3f3f3" stroke="#4a4a4a" stroke-width="1.2"/><rect x="0.6" y="0.6" width="10" height="1.6" fill="#4a4a4a"/><path d="M2.6 2V9.5" stroke="#4a4a4a" stroke-width="1"/><path d="M4 4.5H9M4 6.8H9" stroke="#4a4a4a" stroke-width="1.3" stroke-dasharray="2 0.8"/></svg>
<svg style="left:1210px;top:978px" width="12" height="11" viewBox="0 0 12 11" ><g fill="#6a6a6a"><rect x="3.5" y="0" width="2.6" height="2.6"/><rect x="6.8" y="0" width="2.6" height="2.6"/><rect x="0" y="3.4" width="2.6" height="2.6"/><rect x="3.5" y="3.4" width="2.6" height="2.6" fill="#e9e9e9" stroke="#6a6a6a" stroke-width="0.6"/><rect x="6.8" y="3.4" width="2.6" height="2.6"/><rect x="0" y="6.8" width="2.6" height="2.6"/><rect x="3.5" y="6.8" width="2.6" height="2.6" fill="#e9e9e9" stroke="#6a6a6a" stroke-width="0.6"/><rect x="6.8" y="6.8" width="2.6" height="2.6"/></g><path d="M9.3 5.5v3.6M7.6 7.3h3.4" stroke="#333" stroke-width="1"/></svg>
<svg style="left:1228px;top:978px" width="12" height="11" viewBox="0 0 12 11" ><path d="M0.6 3.6L3.4 0.8V7.5M0.6 3.6V9.4H9.5L10.6 8.2" fill="none" stroke="#4a4a4a" stroke-width="1.1"/><rect x="3.6" y="3.4" width="2.2" height="4.4" fill="#bdbdbd" stroke="#4a4a4a" stroke-width="0.9"/><rect x="6.6" y="0.6" width="2.2" height="7.2" fill="#bdbdbd" stroke="#4a4a4a" stroke-width="0.9"/></svg>
<span class="t" style="left:1244.00px;top:979.23px;font-size:8px;line-height:8px;color:#2a2a2a;font-weight:bold;transform:scaleX(0.8266);transform-origin:0 0;">SQL</span>
<svg style="left:1265px;top:978px" width="11" height="11" viewBox="0 0 11 11" ><path d="M0.5 0.5L4 6H0.5Z" fill="#d0d0d0" stroke="#4a4a4a" stroke-width="0.9"/><path d="M3 6.5L9.8 0.8" stroke="#4a4a4a" stroke-width="1.8"/><rect x="1" y="8" width="9.3" height="2" fill="#4a4a4a"/><path d="M2.5 9h7" stroke="#ddd" stroke-width="0.7" stroke-dasharray="1 1"/></svg>
<div style="left:0px;top:994px;width:1280px;height:30px;background:linear-gradient(#ffffff 0,#fbfcfe 4px,#e6ecf6 10px,#c6d2e8 20px,#a9b8d8 28px,#a3b1d1 30px)"></div>
<div style="left:0px;top:994px;width:118px;height:30px;background:linear-gradient(90deg,rgba(110,138,195,.8) 0,rgba(150,172,212,.4) 8%,rgba(255,255,255,.25) 30%,rgba(255,255,255,.15) 60%,rgba(150,170,210,.15) 100%);-webkit-mask-image:linear-gradient(rgba(0,0,0,.15) 0,rgba(0,0,0,.5) 25%,#000 60%);mask-image:linear-gradient(rgba(0,0,0,.15) 0,rgba(0,0,0,.5) 25%,#000 60%)"></div>
<div style="left:1150px;top:994px;width:130px;height:30px;background:linear-gradient(90deg,rgba(255,255,255,0) 0,rgba(255,255,255,.35) 40%,rgba(255,255,255,.45) 100%)"></div>
<svg style="left:80px;top:996px" width="1080" height="28" viewBox="0 0 1080 28" ><defs><linearGradient id="tb" x1="0" y1="0" x2="0" y2="1"><stop offset="0" stop-color="#7a8dca"/><stop offset="0.25" stop-color="#6b7cc0"/><stop offset="0.75" stop-color="#6273ba"/><stop offset="0.78" stop-color="#8ea8e4"/><stop offset="1" stop-color="#a6c2f3"/></linearGradient><linearGradient id="tbh" x1="0" y1="0" x2="1" y2="0"><stop offset="0" stop-color="#8da3dc" stop-opacity="0.75"/><stop offset="0.12" stop-color="#6576bb" stop-opacity="0.2"/><stop offset="0.3" stop-color="#4d5ca3" stop-opacity="0.45"/><stop offset="1" stop-color="#4d5ca3" stop-opacity="0.45"/></linearGradient></defs><path d="M5 26 C16 18 24 8 33 3 H1046 C1054 7 1062 17 1073 26 Z" fill="url(#tb)"/><path d="M5 26 C16 18 24 8 33 3 H1046 C1054 7 1062 17 1073 26 Z" fill="url(#tbh)"/><path d="M5.5 25.7 C16 18 24 8 33 3 H1046 C1054 7 1062 17 1072.5 25.7" fill="none" stroke="#2d3b8e" stroke-width="1.6"/><path d="M5 25.5 H1073" stroke="#4a5bab" stroke-width="1"/></svg>
<svg style="left:40px;top:994px" width="30" height="30" viewBox="0 0 30 30" ><defs><radialGradient id="sg" cx="0.5" cy="0.35" r="0.7"><stop offset="0" stop-color="#ffffff"/><stop offset="0.6" stop-color="#e3eff6"/><stop offset="1" stop-color="#b9d3e2"/></radialGradient></defs><circle cx="15" cy="15" r="14.3" fill="#f4f7fb"/><circle cx="15" cy="15" r="12.8" fill="#7f8b97"/><circle cx="15" cy="15" r="11.6" fill="url(#sg)"/><path d="M11.5 10.5V19.5L20 15z" fill="#3e6294" stroke="#2a456e" stroke-width="0.8"/></svg>
<div style="left:123px;top:1001px;width:156px;height:17px;background:linear-gradient(#e6ebf5,#d3dbec 50%,#bfcae3);border:1px solid #fff;border-width:2px 1px 0 2px;border-radius:2px;box-shadow:1px 1px 0 #8796c2"></div>
<span class="t" style="left:157.50px;top:1003.69px;font-size:11px;line-height:11px;color:#7b98d4;transform:scaleX(1.0522);transform-origin:0 0;text-shadow:0 1px 0 #f4f7fc;">В Контакте | Та...</span>
<svg style="left:136px;top:1001px" width="19" height="17" viewBox="0 0 19 17" ><ellipse cx="7" cy="11" rx="5.5" ry="3.2" fill="#8c93a6" opacity="0.65"/><ellipse cx="11.7" cy="8" rx="5.7" ry="7.2" fill="#d2222a"/><ellipse cx="10.8" cy="6" rx="3" ry="4" fill="#ef6a6a" opacity="0.6"/><ellipse cx="11.7" cy="8" rx="2.3" ry="5.2" fill="#e9ecf5"/></svg>
<div style="left:283px;top:1001px;width:157px;height:17px;background:linear-gradient(#5565ad,#5f70b6 55%,#6b7cc2);border:1px solid #4a59a4;border-radius:2px"></div>
<span class="t" style="left:319.00px;top:1003.69px;font-size:11px;line-height:11px;color:#c6d1f1;transform:scaleX(1.0026);transform-origin:0 0;text-shadow:1px 1px 0 #39478c;">Microsoft Access ...</span>
<svg style="left:299px;top:1001px" width="16" height="17" viewBox="0 0 16 17" ><rect x="0.5" y="1.5" width="14.5" height="14.5" rx="3.5" fill="#b03a52" stroke="#f0ccd4" stroke-width="1"/><circle cx="10" cy="6.8" r="2.8" fill="none" stroke="#fff" stroke-width="1.8"/><path d="M8 8.8L3.2 13.6M5 12l1.6 1.6" stroke="#fff" stroke-width="1.8"/></svg>
<div style="left:443px;top:1001px;width:156px;height:17px;background:linear-gradient(#e6ebf5,#d3dbec 50%,#bfcae3);border:1px solid #fff;border-width:2px 1px 0 2px;border-radius:2px;box-shadow:1px 1px 0 #8796c2"></div>
<span class="t" style="left:477.50px;top:1003.69px;font-size:11px;line-height:11px;color:#7b98d4;transform:scaleX(1.0433);transform-origin:0 0;text-shadow:0 1px 0 #f4f7fc;">курсач</span>
<svg style="left:459px;top:1001px" width="13" height="17" viewBox="0 0 13 17" ><path d="M1.5 2.5h5.5l1.5 2H12V15.5H1.5z" fill="#ecd45e" stroke="#b79a2a" stroke-width="0.8"/><path d="M1.5 2.5h3.2v13H1.5z" fill="#6fa84a"/></svg>
<div style="left:603px;top:1001px;width:156px;height:17px;background:linear-gradient(#e6ebf5,#d3dbec 50%,#bfcae3);border:1px solid #fff;border-width:2px 1px 0 2px;border-radius:2px;box-shadow:1px 1px 0 #8796c2"></div>
<span class="t" style="left:637.50px;top:1003.69px;font-size:11px;line-height:11px;color:#7b98d4;transform:scaleX(1.0062);transform-origin:0 0;text-shadow:0 1px 0 #f4f7fc;">Документ Micros...</span>
<svg style="left:617px;top:1001px" width="16" height="17" viewBox="0 0 16 17" ><path d="M3.5 0.5h8.5l3.5 3.5v12.5h-12z" fill="#fff" stroke="#5a6b8c"/><path d="M6 9h7M6 11h7M6 13h7" stroke="#9aa6c0"/><rect x="0.5" y="2.5" width="9" height="9" fill="#2b57a5" stroke="#1c3c80"/><text x="5" y="10" font-family="Liberation Sans" font-weight="bold" font-size="8" fill="#fff" text-anchor="middle">W</text></svg>
<div style="left:1086px;top:1002px;width:16px;height:15px;background:#5666ad"></div>
<span class="t" style="left:1087.70px;top:1003.89px;font-size:11px;line-height:11px;color:#8296d4;transform:scaleX(0.7526);transform-origin:0 0;">UK</span>
<svg style="left:1112px;top:1000px" width="18" height="18" viewBox="0 0 18 18" ><circle cx="9" cy="9" r="8.4" fill="#8b97a4"/><circle cx="9" cy="9" r="7.2" fill="#f4f9fc"/><rect x="4.8" y="5.6" width="1.7" height="6.8" fill="#3e6294"/><path d="M12.6 5.2V12.8L7 9z" fill="#3e6294"/></svg>
<svg style="left:1162px;top:1001px" width="16" height="17" viewBox="0 0 16 17" ><rect x="0.8" y="2.5" width="9" height="8" rx="1" fill="#9aa3ad" stroke="#5f676f"/><rect x="2" y="4" width="2.5" height="5" fill="#e8ecef"/><path d="M5.5 4.5C6 1.5 12 0.5 14 3.5V9.5H6.5Z" fill="#f2c9a2" stroke="#b07c4c" stroke-width="0.7"/><path d="M5.5 11.2h9.5l-4.7 5z" fill="#2a93e8"/></svg>
<svg style="left:1180px;top:1001px" width="16" height="17" viewBox="0 0 16 17" ><path d="M8 0.5L15 3.5V11L8 16.5L1 11V3.5Z" fill="#7ab317" stroke="#4a7a0c"/><ellipse cx="8" cy="8.8" rx="3.4" ry="4" fill="#1f3209"/><path d="M2.5 5l3 2.2M13.5 5l-3 2.2M2.5 12.5l3-2M13.5 12.5l-3-2M2.5 8.8h11" stroke="#1f3209" stroke-width="1"/></svg>
<svg style="left:1198px;top:1001px" width="16" height="17" viewBox="0 0 16 17" ><rect x="0.8" y="0.8" width="14.4" height="15.4" rx="1.5" fill="#fdf1f5" stroke="#35c235" stroke-width="1.6"/><circle cx="9.5" cy="6.5" r="4.3" fill="#f48fb1"/><path d="M7 4.5L12 9.5L7 14.5L2 9.5Z" fill="#f6c21e" stroke="#b98a0a" stroke-width="0.7"/><text x="7" y="12.3" font-family="Liberation Sans" font-weight="bold" font-size="7" fill="#c11" text-anchor="middle">?</text></svg>
<svg style="left:1216px;top:1001px" width="16" height="17" viewBox="0 0 16 17" ><rect x="0.5" y="0.5" width="15" height="16" rx="2.5" fill="#0a0a0a"/><rect x="2" y="7" width="12" height="8.3" fill="#17c02d"/><rect x="2" y="7" width="12" height="2" fill="#63e472"/></svg>
<span class="t" style="left:1241.80px;top:1004.07px;font-size:11.5px;line-height:11.5px;color:#6a80c2;transform:scaleX(0.9826);transform-origin:0 0;text-shadow:1px 1px 0 #fff;">5:07</span>
</body></html>
